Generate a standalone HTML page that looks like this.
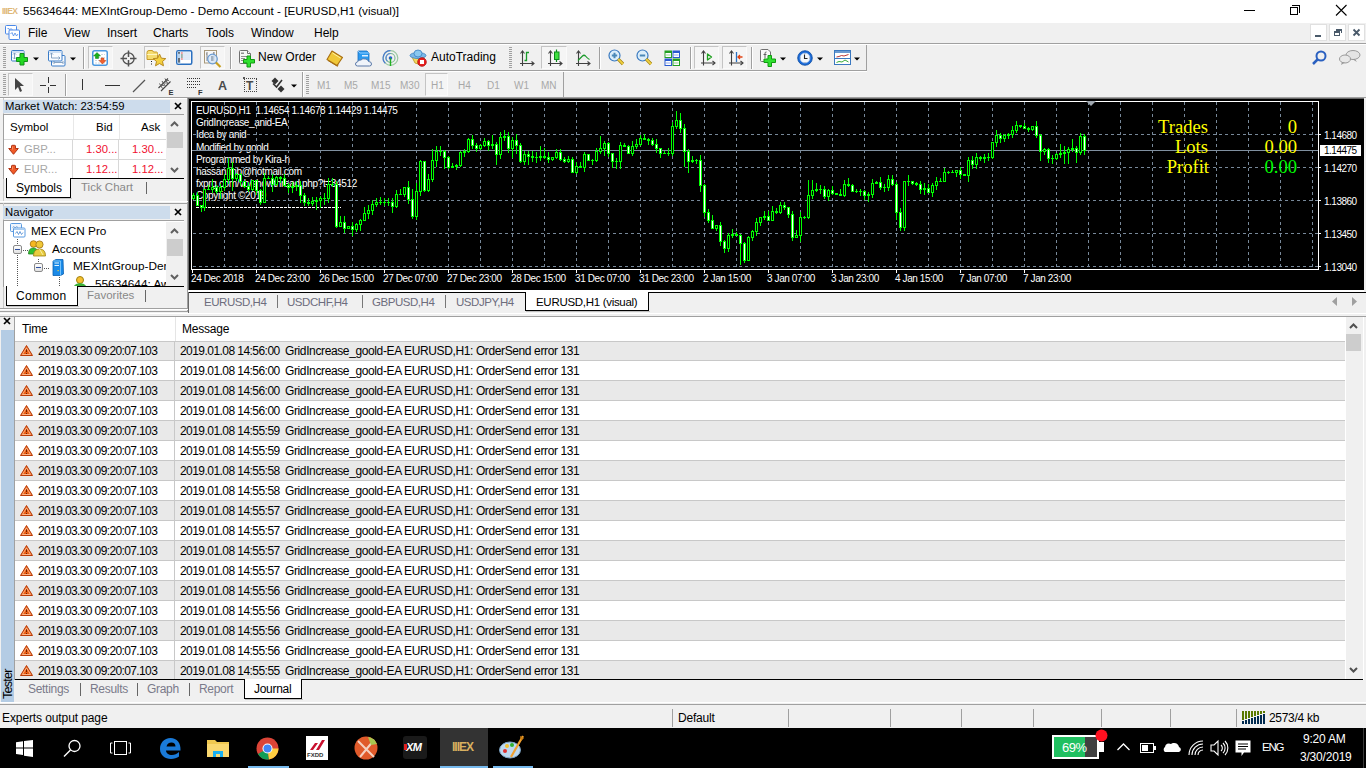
<!DOCTYPE html><html><head><meta charset="utf-8"><style>
*{margin:0;padding:0;box-sizing:border-box}
html,body{width:1366px;height:768px;overflow:hidden;background:#f0f0f0;font-family:"Liberation Sans",sans-serif;font-size:11px;color:#000;position:relative}
.abs{position:absolute}
.t{position:absolute;white-space:nowrap;line-height:1}
svg{position:absolute;overflow:visible}
</style></head><body>

<div class="abs" style="left:0px;top:0px;width:1366px;height:23px;background:#fff"></div>
<div class="t" style="left:2px;top:7px;font-size:8.5px;font-weight:bold;color:#e0b878;letter-spacing:-0.6px">IIIEX</div>
<div class="t" style="left:23px;top:5px;font-size:11.7px">55634644: MEXIntGroup-Demo - Demo Account - [EURUSD,H1 (visual)]</div>
<div class="abs" style="left:1244px;top:10px;width:11px;height:1px;background:#000"></div>
<div class="abs" style="left:1290px;top:7px;width:8px;height:8px;border:1px solid #000;background:#fff"></div>
<div class="abs" style="left:1292px;top:5px;width:8px;height:8px;border-top:1px solid #000;border-right:1px solid #000"></div>
<svg style="left:1336px;top:5px" width="11" height="11"><path d="M0 0L10.5 10.5M10.5 0L0 10.5" stroke="#000" stroke-width="1.1"/></svg>
<div class="abs" style="left:0px;top:23px;width:1366px;height:20px;background:#f0f0f0"></div>
<svg style="left:5px;top:25px" width="15" height="15"><rect x="0.5" y="0.5" width="11" height="8.5" rx="1" fill="#fff" stroke="#4a88e8"/><path d="M2.5 4L3.5 3L4.5 5L6 3.5L7.5 5" fill="none" stroke="#4a88e8" stroke-width="0.8"/><rect x="4" y="5" width="10.5" height="9.5" rx="1" fill="#fff" stroke="#4a88e8"/><path d="M5.5 9L7 7.5L8.5 11L10 8L11.5 11L13 9" fill="none" stroke="#4a88e8" stroke-width="0.8"/></svg>
<div class="t" style="left:28px;top:27px;font-size:12px">File</div>
<div class="t" style="left:64px;top:27px;font-size:12px">View</div>
<div class="t" style="left:107px;top:27px;font-size:12px">Insert</div>
<div class="t" style="left:153px;top:27px;font-size:12px">Charts</div>
<div class="t" style="left:206px;top:27px;font-size:12px">Tools</div>
<div class="t" style="left:251px;top:27px;font-size:12px">Window</div>
<div class="t" style="left:314px;top:27px;font-size:12px">Help</div>
<div class="abs" style="left:1310px;top:24px;width:17px;height:17px;background:#fff;border:1px solid #e0e0e0"></div>
<div class="abs" style="left:1329px;top:24px;width:17px;height:17px;background:#fff;border:1px solid #e0e0e0"></div>
<div class="abs" style="left:1348px;top:24px;width:17px;height:17px;background:#fff;border:1px solid #e0e0e0"></div>
<div class="abs" style="left:1315px;top:35px;width:6px;height:2px;background:#4a5a6a"></div>
<div class="abs" style="left:1334px;top:31px;width:6px;height:5px;border:1px solid #4a5a6a;border-top-width:2px"></div>
<div class="abs" style="left:1336px;top:29px;width:6px;height:4px;border-top:2px solid #4a5a6a;border-right:1px solid #4a5a6a"></div>
<svg style="left:1353px;top:29px" width="7" height="7"><path d="M0.5 0.5L6.5 6.5M6.5 0.5L0.5 6.5" stroke="#4a5a6a" stroke-width="1.8"/></svg>
<div class="abs" style="left:0px;top:43px;width:1366px;height:1px;background:#a0a0a0"></div>
<div class="abs" style="left:0px;top:44px;width:1366px;height:1px;background:#fff"></div>
<div class="abs" style="left:866px;top:45px;width:1px;height:26px;background:#a0a0a0"></div>
<div class="abs" style="left:0px;top:70px;width:866px;height:1px;background:#a0a0a0"></div>
<div class="abs" style="left:0px;top:71px;width:867px;height:1px;background:#fff"></div>
<div class="abs" style="left:3px;top:47px;width:3px;height:1px;background:#a0a0a0"></div>
<div class="abs" style="left:3px;top:49px;width:3px;height:1px;background:#a0a0a0"></div>
<div class="abs" style="left:3px;top:51px;width:3px;height:1px;background:#a0a0a0"></div>
<div class="abs" style="left:3px;top:53px;width:3px;height:1px;background:#a0a0a0"></div>
<div class="abs" style="left:3px;top:55px;width:3px;height:1px;background:#a0a0a0"></div>
<div class="abs" style="left:3px;top:57px;width:3px;height:1px;background:#a0a0a0"></div>
<div class="abs" style="left:3px;top:59px;width:3px;height:1px;background:#a0a0a0"></div>
<div class="abs" style="left:3px;top:61px;width:3px;height:1px;background:#a0a0a0"></div>
<div class="abs" style="left:3px;top:63px;width:3px;height:1px;background:#a0a0a0"></div>
<div class="abs" style="left:3px;top:65px;width:3px;height:1px;background:#a0a0a0"></div>
<div class="abs" style="left:3px;top:67px;width:3px;height:1px;background:#a0a0a0"></div>
<svg style="left:11px;top:50px" width="18" height="16"><rect x="0.5" y="0.5" width="12.5" height="10.5" rx="1" fill="#fafcff" stroke="#3a7cc8"/><rect x="1" y="1" width="11.5" height="2" fill="#cfe0f4"/><path d="M3.5 3V9M2 4.5L3.5 3L5 4.5M2 7.5L3.5 9L5 7.5" fill="none" stroke="#7a9abc" stroke-width="0.9"/><path d="M9 3.5H13V7.5H16.5V11.5H13V15H9V11.5H5.5V7.5H9Z" fill="#22d822" stroke="#10901a" stroke-width="1"/></svg>
<svg style="left:33px;top:57px" width="6" height="4"><path d="M0 0.5H6L3 3.5Z" fill="#000"/></svg>
<svg style="left:48px;top:50px" width="18" height="17"><rect x="3.5" y="5.5" width="13.5" height="10.5" rx="1" fill="#fafcff" stroke="#3a7cc8"/><path d="M6 12.5H15M6.5 11L5 12.5L6.5 14M14.5 11L16 12.5L14.5 14" fill="none" stroke="#7a9abc" stroke-width="0.9"/><rect x="0.5" y="0.5" width="13.5" height="10.5" rx="1" fill="#fafcff" stroke="#3a7cc8"/><rect x="1" y="1" width="12.5" height="2" fill="#cfe0f4"/><path d="M3.5 3V8M2 4.5L3.5 3L5 4.5M3.5 8H12M10.5 6.5L12 8L10.5 9.5" fill="none" stroke="#7a9abc" stroke-width="0.9"/></svg>
<svg style="left:70px;top:57px" width="6" height="4"><path d="M0 0.5H6L3 3.5Z" fill="#000"/></svg>
<div class="abs" style="left:83px;top:47px;width:1px;height:22px;background:#a0a0a0"></div>
<div class="abs" style="left:84px;top:47px;width:1px;height:22px;background:#fff"></div>
<div class="abs" style="left:88px;top:46px;width:25px;height:23px;background:#f5f5f5;border:1px solid #c4c4c4;border-right-color:#fafafa;border-bottom-color:#fafafa"></div>
<svg style="left:92px;top:50px" width="17" height="16"><rect x="0.75" y="0.75" width="14.5" height="14.5" rx="2" fill="#fff" stroke="#4a98e0" stroke-width="1.5"/><path d="M3 4.5H13M3 7.5H13M3 10.5H13M3 13H13" stroke="#d0d8e0" stroke-dasharray="2 1"/><path d="M5 2.5L8.5 6H6.5V8.5H3.5V6H1.5Z" fill="#18b018" stroke="#0a8010" stroke-width="0.5"/><path d="M10.5 14L14 10.5H12V8H9V10.5H7Z" fill="#f06030" stroke="#c04010" stroke-width="0.5"/></svg>
<svg style="left:120px;top:50px" width="17" height="17"><circle cx="8.5" cy="8.5" r="5.6" fill="none" stroke="#505050" stroke-width="1.3"/><path d="M8.5 0.5V7M8.5 10V16.5M0.5 8.5H7M10 8.5H16.5" stroke="#505050" stroke-width="1.5"/></svg>
<div class="abs" style="left:144px;top:46px;width:26px;height:23px;background:#f5f5f5;border:1px solid #c4c4c4;border-right-color:#fafafa;border-bottom-color:#fafafa"></div>
<svg style="left:146px;top:49px" width="21" height="18"><path d="M1 3.5Q1 1.5 3 1.5H6Q7 1.5 7.5 3H10.5Q11.5 3 11.5 4.5V10.5H1Z" fill="#f5dc70" stroke="#c89a28" stroke-width="1"/><path d="M1.2 5.5H11.3" stroke="#fff6c0"/><path d="M5.5 12V17" stroke="#222" stroke-dasharray="1 1.5"/><path d="M13.5 5L15.4 9.2L19.8 9.6L16.5 12.5L17.5 16.8L13.5 14.5L9.5 16.8L10.5 12.5L7.2 9.6L11.6 9.2Z" fill="#f4d040" stroke="#b88a20" stroke-width="1" stroke-linejoin="round"/></svg>
<svg style="left:176px;top:50px" width="17" height="16"><rect x="0.75" y="0.75" width="15" height="13.5" rx="1.5" fill="#fff" stroke="#2a70c0" stroke-width="1.5"/><rect x="1.5" y="1.5" width="3" height="12" fill="#b8d4f0"/><rect x="2.3" y="8" width="1.4" height="4.5" fill="#444"/><rect x="2.3" y="2.2" width="1.4" height="1.4" fill="#222"/><path d="M6.5 3H14.5M6.5 5H14.5M6.5 7H14.5M6.5 9H14.5" stroke="#c0d4f0"/><rect x="5.3" y="2.4" width="1.2" height="1.2" fill="#e02020"/><rect x="5.3" y="4.4" width="1.2" height="1.2" fill="#204020"/><rect x="5.3" y="6.4" width="1.2" height="1.2" fill="#204020"/><rect x="5.3" y="8.4" width="1.2" height="1.2" fill="#e02020"/></svg>
<div class="abs" style="left:200px;top:46px;width:25px;height:23px;background:#f5f5f5;border:1px solid #c4c4c4;border-right-color:#fafafa;border-bottom-color:#fafafa"></div>
<svg style="left:203px;top:49px" width="20" height="20"><rect x="1.5" y="1.5" width="12" height="12.5" fill="#f8f8f8" stroke="#a89878"/><path d="M4 3V12M3 5H4M4 9H5M11 3V12M10 4H11M11 8H12" stroke="#777" stroke-width="0.9"/><circle cx="9.5" cy="10" r="4.8" fill="#d8e8f8" fill-opacity="0.85" stroke="#6a9ad0" stroke-width="1.2"/><rect x="8" y="7" width="2.5" height="5" fill="#a0b0c0"/><path d="M13 13.5L17.5 18" stroke="#c8a020" stroke-width="2.2"/></svg>
<div class="abs" style="left:230px;top:47px;width:1px;height:22px;background:#a0a0a0"></div>
<div class="abs" style="left:231px;top:47px;width:1px;height:22px;background:#fff"></div>
<svg style="left:239px;top:50px" width="17" height="18"><path d="M0.5 1.5Q0.5 0.5 1.5 0.5H8.5L11.5 3.5V12.5Q11.5 13.5 10.5 13.5H1.5Q0.5 13.5 0.5 12.5Z" fill="#f8f8f8" stroke="#707070"/><path d="M8.5 0.5V3.5H11.5" fill="#fff" stroke="#707070"/><rect x="2" y="2.5" width="3" height="1.5" fill="#909090"/><path d="M2 6.5H8M2 8.5H6M2 10.5H5" stroke="#909090"/><path d="M8 6H11.5V9.5H15.5V13H11.5V17H8V13H4.5V9.5H8Z" fill="#30e030" stroke="#109a10" stroke-width="1"/></svg>
<div class="t" style="left:258px;top:51px;font-size:12px">New Order</div>
<svg style="left:326px;top:50px" width="18" height="17"><path d="M6 1L16.5 7.5L11 15.5L1 9.5Z" fill="#f0c838" stroke="#a86e10" stroke-width="1.1" stroke-linejoin="round"/><path d="M2 10.5L11.5 16.3L12 14.5" fill="none" stroke="#a86e10" stroke-width="1"/><path d="M6.5 3L14.5 8" stroke="#fff0a0" stroke-width="1"/></svg>
<svg style="left:355px;top:50px" width="17" height="17"><path d="M3 1H12L14 3V11H3Z" fill="#2a9af0" stroke="#1a70c0" stroke-width="0.8"/><rect x="7" y="5" width="6" height="1.5" fill="#e0f0ff"/><path d="M3 1L5 3H14" fill="none" stroke="#a8d8ff" stroke-width="0.8"/><path d="M2.5 16Q0.5 16 0.5 14Q0.5 12 2.5 12Q3 9.5 6 10Q7.5 8 10.5 9Q13 9 13.5 11.5Q16.5 11.5 16.5 14Q16.5 16 14.5 16Z" fill="#f0f4fa" stroke="#5a78a8" stroke-width="1"/></svg>
<svg style="left:382px;top:50px" width="18" height="17"><circle cx="8.5" cy="8" r="7.3" fill="none" stroke="#9ac8a0" stroke-width="1.2"/><path d="M8.5 0.7A7.3 7.3 0 0 0 3.3 13.2" fill="none" stroke="#4a7ad0" stroke-width="1.2"/><circle cx="8.5" cy="8" r="4.5" fill="none" stroke="#7ab890" stroke-width="1.1"/><path d="M8.5 3.5A4.5 4.5 0 0 0 5.3 11.2" fill="none" stroke="#5a8ad8" stroke-width="1.1"/><circle cx="8.5" cy="8" r="1.8" fill="#2a60d0"/><path d="M8.5 8V16" stroke="#22b022" stroke-width="1.4"/></svg>
<svg style="left:409px;top:49px" width="18" height="18"><path d="M3 8L15 8L12 16L6 14Z" fill="#f2d860" stroke="#b89820" stroke-width="0.8"/><ellipse cx="9" cy="6.5" rx="8" ry="3" fill="#7ab8e8" stroke="#3a80c0" stroke-width="0.8"/><ellipse cx="9" cy="4.5" rx="4" ry="3.5" fill="#8ac8f0" stroke="#3a80c0" stroke-width="0.8"/><circle cx="13" cy="13" r="4.3" fill="#e82020" stroke="#b01010" stroke-width="0.8"/><rect x="11" y="11" width="4" height="4" fill="#fff"/></svg>
<div class="t" style="left:431px;top:51px;font-size:12px">AutoTrading</div>
<div class="abs" style="left:509px;top:47px;width:3px;height:1px;background:#a0a0a0"></div>
<div class="abs" style="left:509px;top:49px;width:3px;height:1px;background:#a0a0a0"></div>
<div class="abs" style="left:509px;top:51px;width:3px;height:1px;background:#a0a0a0"></div>
<div class="abs" style="left:509px;top:53px;width:3px;height:1px;background:#a0a0a0"></div>
<div class="abs" style="left:509px;top:55px;width:3px;height:1px;background:#a0a0a0"></div>
<div class="abs" style="left:509px;top:57px;width:3px;height:1px;background:#a0a0a0"></div>
<div class="abs" style="left:509px;top:59px;width:3px;height:1px;background:#a0a0a0"></div>
<div class="abs" style="left:509px;top:61px;width:3px;height:1px;background:#a0a0a0"></div>
<div class="abs" style="left:509px;top:63px;width:3px;height:1px;background:#a0a0a0"></div>
<div class="abs" style="left:509px;top:65px;width:3px;height:1px;background:#a0a0a0"></div>
<div class="abs" style="left:509px;top:67px;width:3px;height:1px;background:#a0a0a0"></div>
<svg style="left:518px;top:49px" width="18" height="18"><path d="M4.5 2V17M2 14.5H16" stroke="#404040" stroke-width="1.1"/><path d="M2.5 4.5L4.5 2L6.5 4.5M13.5 12.5L16 14.5L13.5 16.5" fill="none" stroke="#404040" stroke-width="1.1"/><path d="M6.5 11.5H8.5V3.5H11" fill="none" stroke="#1a9a2a" stroke-width="1.3"/></svg>
<div class="abs" style="left:541px;top:46px;width:26px;height:23px;background:#f5f5f5;border:1px solid #c4c4c4;border-right-color:#fafafa;border-bottom-color:#fafafa"></div>
<svg style="left:546px;top:49px" width="18" height="18"><path d="M4.5 2V17M2 14.5H16" stroke="#404040" stroke-width="1.1"/><path d="M2.5 4.5L4.5 2L6.5 4.5M13.5 12.5L16 14.5L13.5 16.5" fill="none" stroke="#404040" stroke-width="1.1"/><path d="M10.5 0.5V13" stroke="#0a8a1a" stroke-width="1.2"/><rect x="8.5" y="3" width="4.5" height="7.5" fill="#40e040" stroke="#0a8a1a" stroke-width="1"/></svg>
<svg style="left:574px;top:49px" width="18" height="18"><path d="M4.5 2V17M2 14.5H16" stroke="#404040" stroke-width="1.1"/><path d="M2.5 4.5L4.5 2L6.5 4.5M13.5 12.5L16 14.5L13.5 16.5" fill="none" stroke="#404040" stroke-width="1.1"/><path d="M4 11.5Q6.5 9 8.5 7Q10 5.5 11.5 7Q13.5 9.5 15.5 10.5" fill="none" stroke="#1a9a2a" stroke-width="1.2"/></svg>
<div class="abs" style="left:599px;top:47px;width:1px;height:22px;background:#a0a0a0"></div>
<div class="abs" style="left:600px;top:47px;width:1px;height:22px;background:#fff"></div>
<svg style="left:608px;top:49px" width="17" height="17"><circle cx="6.5" cy="6.5" r="5.5" fill="#dceefa" stroke="#3a7ac0" stroke-width="1.2"/><path d="M10.2 10.2L15 15" stroke="#a08010" stroke-width="3.2"/><path d="M10.2 10.2L15 15" stroke="#f0d040" stroke-width="1.8"/><path d="M3.8 6.5H9.2M6.5 3.8V9.2" stroke="#4a88b8" stroke-width="2"/></svg>
<svg style="left:636px;top:49px" width="17" height="17"><circle cx="6.5" cy="6.5" r="5.5" fill="#dceefa" stroke="#3a7ac0" stroke-width="1.2"/><path d="M10.2 10.2L15 15" stroke="#a08010" stroke-width="3.2"/><path d="M10.2 10.2L15 15" stroke="#f0d040" stroke-width="1.8"/><path d="M3.8 6.5H9.2" stroke="#4a88b8" stroke-width="2"/></svg>
<svg style="left:664px;top:50px" width="17" height="17"><rect x="0.5" y="0.5" width="7.5" height="7.5" fill="#22a022"/><rect x="1.5" y="3.0" width="5.5" height="4" fill="#fff"/><path d="M2.0 5.0H6.5" stroke="#22a022" stroke-width="0.8" opacity="0.6"/><rect x="8.5" y="0.5" width="7.5" height="7.5" fill="#2a5ad0"/><rect x="9.5" y="3.0" width="5.5" height="4" fill="#fff"/><path d="M10.0 5.0H14.5" stroke="#2a5ad0" stroke-width="0.8" opacity="0.6"/><rect x="0.5" y="8.5" width="7.5" height="7.5" fill="#2a5ad0"/><rect x="1.5" y="11.0" width="5.5" height="4" fill="#fff"/><path d="M2.0 13.0H6.5" stroke="#2a5ad0" stroke-width="0.8" opacity="0.6"/><rect x="8.5" y="8.5" width="7.5" height="7.5" fill="#22a022"/><rect x="9.5" y="11.0" width="5.5" height="4" fill="#fff"/><path d="M10.0 13.0H14.5" stroke="#22a022" stroke-width="0.8" opacity="0.6"/></svg>
<div class="abs" style="left:690px;top:47px;width:1px;height:22px;background:#a0a0a0"></div>
<div class="abs" style="left:691px;top:47px;width:1px;height:22px;background:#fff"></div>
<div class="abs" style="left:694px;top:46px;width:25px;height:23px;background:#f5f5f5;border:1px solid #c4c4c4;border-right-color:#fafafa;border-bottom-color:#fafafa"></div>
<svg style="left:699px;top:49px" width="18" height="18"><path d="M4.5 2V16.5M2 14H16" stroke="#404040" stroke-width="1.1"/><path d="M2.5 4.5L4.5 2L6.5 4.5M13.5 12L16 14L13.5 16" fill="none" stroke="#404040" stroke-width="1.1"/><path d="M8.5 5V11L12.5 8Z" fill="none" stroke="#20a020" stroke-width="1.3" stroke-linejoin="round"/></svg>
<div class="abs" style="left:722px;top:46px;width:25px;height:23px;background:#f5f5f5;border:1px solid #c4c4c4;border-right-color:#fafafa;border-bottom-color:#fafafa"></div>
<svg style="left:727px;top:49px" width="18" height="18"><path d="M4.5 2V16.5M2 14H16" stroke="#404040" stroke-width="1.1"/><path d="M2.5 4.5L4.5 2L6.5 4.5M13.5 12L16 14L13.5 16" fill="none" stroke="#404040" stroke-width="1.1"/><path d="M9.5 3V13" stroke="#2a70c0" stroke-width="1.3"/><path d="M15.5 8H11M13 6L11 8L13 10" fill="none" stroke="#e04010" stroke-width="1.3"/></svg>
<div class="abs" style="left:751px;top:47px;width:1px;height:22px;background:#a0a0a0"></div>
<div class="abs" style="left:752px;top:47px;width:1px;height:22px;background:#fff"></div>
<svg style="left:760px;top:49px" width="19" height="19"><path d="M0.5 1.5Q0.5 0.5 1.5 0.5H8L10.5 3V12.5H1.5Q0.5 12.5 0.5 11.5Z" fill="#f8f8f8" stroke="#707070"/><path d="M5 9V4Q5 3 6.5 3M3.5 5.5H6.5" fill="none" stroke="#555" stroke-width="0.9"/><path d="M8 6.5H11.5V10H15.5V13.5H11.5V17.5H8V13.5H4V10H8Z" fill="#30e030" stroke="#109a10" stroke-width="1"/></svg>
<svg style="left:780px;top:57px" width="6" height="4"><path d="M0 0.5H6L3 3.5Z" fill="#000"/></svg>
<svg style="left:797px;top:50px" width="17" height="17"><circle cx="8" cy="8" r="7.3" fill="#1a6ad8" stroke="#0a4aa0" stroke-width="0.8"/><circle cx="8" cy="8" r="5" fill="#f4f8fc" stroke="#a0c0e8" stroke-width="0.6"/><path d="M7.5 4.5V8.5H10.5" fill="none" stroke="#222" stroke-width="1.1"/><path d="M8 3.3V3.9M8 12.1V12.7M3.3 8H3.9M12.1 8H12.7" stroke="#666" stroke-width="0.8"/></svg>
<svg style="left:817px;top:57px" width="6" height="4"><path d="M0 0.5H6L3 3.5Z" fill="#000"/></svg>
<svg style="left:834px;top:50px" width="17" height="15"><rect x="0.5" y="0.5" width="16" height="14" fill="#fff" stroke="#3a78c0"/><rect x="1" y="1" width="15" height="2" fill="#6a9ad0"/><path d="M2.5 7L5 6.5L7.5 5.5L10 6L14.5 4.5" fill="none" stroke="#b02020" stroke-width="0.9"/><path d="M2.5 12.5L5 11.5L8 12L11 10L14.5 12" fill="none" stroke="#20a020" stroke-width="0.9"/><path d="M1 8.5H16" stroke="#3a78c0"/></svg>
<svg style="left:854px;top:57px" width="6" height="4"><path d="M0 0.5H6L3 3.5Z" fill="#000"/></svg>
<svg style="left:1311px;top:50px" width="16" height="16"><circle cx="10" cy="6" r="4.5" fill="none" stroke="#2a60c0" stroke-width="2"/><path d="M7 9L2 14" stroke="#2a60c0" stroke-width="2.5"/></svg>
<svg style="left:1339px;top:50px" width="22" height="15"><ellipse cx="14" cy="5" rx="7" ry="4.5" fill="#e4e4e4" stroke="#9a9a9a"/><path d="M16 9L18 12L13 9Z" fill="#9a9a9a"/><ellipse cx="6" cy="9" rx="5.5" ry="4" fill="#e8e8e8" stroke="#9a9a9a"/><path d="M3 12L2 15L6 12.5Z" fill="#9a9a9a"/></svg>
<div class="abs" style="left:563px;top:72px;width:1px;height:26px;background:#a0a0a0"></div>
<div class="abs" style="left:3px;top:74px;width:3px;height:1px;background:#a0a0a0"></div>
<div class="abs" style="left:3px;top:76px;width:3px;height:1px;background:#a0a0a0"></div>
<div class="abs" style="left:3px;top:78px;width:3px;height:1px;background:#a0a0a0"></div>
<div class="abs" style="left:3px;top:80px;width:3px;height:1px;background:#a0a0a0"></div>
<div class="abs" style="left:3px;top:82px;width:3px;height:1px;background:#a0a0a0"></div>
<div class="abs" style="left:3px;top:84px;width:3px;height:1px;background:#a0a0a0"></div>
<div class="abs" style="left:3px;top:86px;width:3px;height:1px;background:#a0a0a0"></div>
<div class="abs" style="left:3px;top:88px;width:3px;height:1px;background:#a0a0a0"></div>
<div class="abs" style="left:3px;top:90px;width:3px;height:1px;background:#a0a0a0"></div>
<div class="abs" style="left:3px;top:92px;width:3px;height:1px;background:#a0a0a0"></div>
<div class="abs" style="left:3px;top:94px;width:3px;height:1px;background:#a0a0a0"></div>
<div class="abs" style="left:8px;top:73px;width:25px;height:23px;background:#f5f5f5;border:1px solid #c4c4c4;border-right-color:#fafafa;border-bottom-color:#fafafa"></div>
<svg style="left:15px;top:78px" width="10" height="14"><path d="M0 0L9 8H5L7 13L5 14L3 9L0 12Z" fill="#444"/></svg>
<svg style="left:40px;top:77px" width="16" height="16" shape-rendering="crispEdges"><path d="M8 0V6M8 10V16M0 8H6M10 8H16" stroke="#333" stroke-width="1"/></svg>
<div class="abs" style="left:65px;top:74px;width:1px;height:22px;background:#a0a0a0"></div>
<div class="abs" style="left:66px;top:74px;width:1px;height:22px;background:#fff"></div>
<div class="abs" style="left:82px;top:79px;width:1px;height:11px;background:#333"></div>
<div class="abs" style="left:105px;top:85px;width:15px;height:1px;background:#333"></div>
<svg style="left:132px;top:79px" width="14" height="14"><path d="M1 13L13 1" stroke="#555" stroke-width="1.3"/></svg>
<svg style="left:157px;top:76px" width="20" height="20"><path d="M1.5 12L11 2.5M4 15L13.5 5.5" stroke="#444" stroke-width="1.1"/><path d="M2.5 7.5L5.5 12.5M5 5L8.5 10.5M8 2.5L11 8" stroke="#555" stroke-width="1"/><path d="M3 9.5H7M5.5 7H10M8.5 4.5H12" stroke="#666" stroke-width="0.9"/><text x="11.5" y="18.5" font-size="7.5" font-weight="bold" fill="#333" font-family="Liberation Sans">E</text></svg>
<svg style="left:187px;top:77px" width="18" height="19" shape-rendering="crispEdges"><path d="M0 1.5H14M0 4.5H14M0 7.5H14M0 10.5H9" stroke="#333" stroke-width="1" stroke-dasharray="1 1"/><text x="11" y="17.5" font-size="7.5" font-weight="bold" fill="#333" font-family="Liberation Sans">F</text></svg>
<div class="t" style="left:218px;top:80px;font-size:12.5px;font-weight:bold;color:#4a4a4a">A</div>
<div class="abs" style="left:244px;top:78px;width:13px;height:14px;border:1px dotted #444"></div>
<div class="abs" style="left:243px;top:77px;width:2px;height:2px;background:#555"></div>
<div class="t" style="left:246px;top:80px;font-size:12px;font-weight:bold;color:#4a4a4a">T</div>
<svg style="left:271px;top:77px" width="14" height="16"><path d="M4 0.5L7.5 4L4 7.5L0.5 4Z" fill="#333"/><path d="M10 8.5L13.5 12L10 15.5L6.5 12Z" fill="#333"/><path d="M2 6.5L5.5 10L11 3" fill="none" stroke="#333" stroke-width="1.6"/></svg>
<svg style="left:291px;top:84px" width="6" height="4"><path d="M0 0.5H6L3 3.5Z" fill="#000"/></svg>
<div class="abs" style="left:302px;top:72px;width:1px;height:25px;background:#a0a0a0"></div>
<div class="abs" style="left:303px;top:72px;width:1px;height:25px;background:#fff"></div>
<div class="abs" style="left:306px;top:75px;width:3px;height:1px;background:#a0a0a0"></div>
<div class="abs" style="left:306px;top:77px;width:3px;height:1px;background:#a0a0a0"></div>
<div class="abs" style="left:306px;top:79px;width:3px;height:1px;background:#a0a0a0"></div>
<div class="abs" style="left:306px;top:81px;width:3px;height:1px;background:#a0a0a0"></div>
<div class="abs" style="left:306px;top:83px;width:3px;height:1px;background:#a0a0a0"></div>
<div class="abs" style="left:306px;top:85px;width:3px;height:1px;background:#a0a0a0"></div>
<div class="abs" style="left:306px;top:87px;width:3px;height:1px;background:#a0a0a0"></div>
<div class="abs" style="left:306px;top:89px;width:3px;height:1px;background:#a0a0a0"></div>
<div class="abs" style="left:306px;top:91px;width:3px;height:1px;background:#a0a0a0"></div>
<div class="abs" style="left:306px;top:93px;width:3px;height:1px;background:#a0a0a0"></div>
<div class="abs" style="left:425px;top:73px;width:23px;height:23px;background:#f5f5f5;border:1px solid #c4c4c4;border-right-color:#fafafa;border-bottom-color:#fafafa"></div>
<div class="t" style="left:317px;top:81px;font-size:10px;color:#a8a8a8">M1</div>
<div class="t" style="left:344px;top:81px;font-size:10px;color:#a8a8a8">M5</div>
<div class="t" style="left:371px;top:81px;font-size:10px;color:#a8a8a8">M15</div>
<div class="t" style="left:400px;top:81px;font-size:10px;color:#a8a8a8">M30</div>
<div class="t" style="left:431px;top:81px;font-size:10px;color:#a8a8a8">H1</div>
<div class="t" style="left:458px;top:81px;font-size:10px;color:#a8a8a8">H4</div>
<div class="t" style="left:487px;top:81px;font-size:10px;color:#a8a8a8">D1</div>
<div class="t" style="left:514px;top:81px;font-size:10px;color:#a8a8a8">W1</div>
<div class="t" style="left:541px;top:81px;font-size:10px;color:#a8a8a8">MN</div>
<div class="abs" style="left:0px;top:97px;width:188px;height:1px;background:#a0a0a0"></div>
<div class="abs" style="left:0px;top:98px;width:187px;height:1px;background:#fff"></div>
<div class="abs" style="left:187px;top:97px;width:1px;height:215px;background:#a0a0a0"></div>
<div class="abs" style="left:3px;top:98px;width:1px;height:103px;background:#c8c8c8"></div>
<div class="abs" style="left:3px;top:100px;width:167px;height:13px;background:#cddcec"></div>
<div class="t" style="left:5px;top:101px;font-size:11.3px">Market Watch: 23:54:59</div>
<svg style="left:175px;top:103px" width="6" height="6"><path d="M0 0L6 6M6 0L0 6" stroke="#000" stroke-width="1.7"/></svg>
<div class="abs" style="left:3px;top:114px;width:181px;height:65px;background:#fff;border:1px solid #a0a0a0;border-right:none;border-bottom:none"></div>
<div class="abs" style="left:73px;top:115px;width:1px;height:24px;background:#e8e8e8"></div>
<div class="abs" style="left:119px;top:115px;width:1px;height:24px;background:#e8e8e8"></div>
<div class="abs" style="left:4px;top:139px;width:162px;height:1px;background:#d8d8d8"></div>
<div class="abs" style="left:4px;top:159px;width:162px;height:1px;background:#d8d8d8"></div>
<div class="abs" style="left:72px;top:139px;width:1px;height:40px;background:#d8d8d8"></div>
<div class="abs" style="left:118px;top:139px;width:1px;height:40px;background:#d8d8d8"></div>
<div class="t" style="left:10px;top:122px;font-size:11.5px">Symbol</div>
<div class="t" style="left:96px;top:122px;font-size:11.5px">Bid</div>
<div class="t" style="left:141px;top:122px;font-size:11.5px">Ask</div>
<svg style="left:8px;top:145px" width="11" height="10"><path d="M3.5 1Q3.5 0.3 4.5 0.3H6.5Q7.5 0.3 7.5 1V3.5H10.3L5.5 9.3L0.7 3.5H3.5Z" fill="#f05a28" stroke="#a82808" stroke-width="0.9" stroke-linejoin="round"/><path d="M4.5 1.5V4.5" stroke="#ffa070" stroke-width="0.8"/></svg>
<div class="t" style="left:24px;top:144px;font-size:11.3px;color:#a8a8a8">GBP...</div>
<div class="t" style="left:86px;top:144px;font-size:11.3px;color:#f01030">1.30...</div>
<div class="t" style="left:132px;top:144px;font-size:11.3px;color:#f01030">1.30...</div>
<svg style="left:8px;top:165px" width="11" height="10"><path d="M3.5 1Q3.5 0.3 4.5 0.3H6.5Q7.5 0.3 7.5 1V3.5H10.3L5.5 9.3L0.7 3.5H3.5Z" fill="#f05a28" stroke="#a82808" stroke-width="0.9" stroke-linejoin="round"/><path d="M4.5 1.5V4.5" stroke="#ffa070" stroke-width="0.8"/></svg>
<div class="t" style="left:24px;top:164px;font-size:11.3px;color:#a8a8a8">EUR...</div>
<div class="t" style="left:86px;top:164px;font-size:11.3px;color:#f01030">1.12...</div>
<div class="t" style="left:132px;top:164px;font-size:11.3px;color:#f01030">1.12...</div>
<div class="abs" style="left:166px;top:115px;width:18px;height:64px;background:#f0f0f0"></div>
<svg style="left:170px;top:121px" width="9" height="6"><path d="M1 5L4.5 1.5L8 5" fill="none" stroke="#606060" stroke-width="2"/></svg>
<div class="abs" style="left:167px;top:132px;width:16px;height:16px;background:#cdcdcd"></div>
<svg style="left:170px;top:167px" width="9" height="6"><path d="M1 1L4.5 4.5L8 1" fill="none" stroke="#606060" stroke-width="2"/></svg>
<div class="abs" style="left:70px;top:178px;width:114px;height:1px;background:#000"></div>
<div class="abs" style="left:6px;top:178px;width:65px;height:20px;background:#fff;border:1px solid #000;border-top:none"></div>
<div class="abs" style="left:7px;top:198px;width:65px;height:1px;background:#c8c8c8"></div>
<div class="t" style="left:16px;top:182px;font-size:12px;letter-spacing:0px">Symbols</div>
<div class="t" style="left:81px;top:182px;font-size:11.5px;color:#888">Tick Chart</div>
<div class="abs" style="left:146px;top:182px;width:1px;height:12px;background:#666"></div>
<div class="abs" style="left:0px;top:201px;width:188px;height:1px;background:#fff"></div>
<div class="abs" style="left:0px;top:203px;width:188px;height:1px;background:#a0a0a0"></div>
<div class="abs" style="left:3px;top:203px;width:1px;height:105px;background:#c8c8c8"></div>
<div class="abs" style="left:3px;top:206px;width:167px;height:13px;background:#cddcec"></div>
<div class="t" style="left:5px;top:207px;font-size:11.3px">Navigator</div>
<svg style="left:175px;top:209px" width="6" height="6"><path d="M0 0L6 6M6 0L0 6" stroke="#000" stroke-width="1.7"/></svg>
<div class="abs" style="left:3px;top:220px;width:181px;height:67px;background:#fff;border:1px solid #a0a0a0;border-right:none;border-bottom:none"></div>
<svg style="left:10px;top:223px" width="16" height="15"><rect x="0.5" y="0.5" width="11" height="8" rx="1" fill="#eef4fc" stroke="#5a9ae0"/><path d="M2.5 4.5L4 3.5L5 5L6.5 3.5L8 4.5" fill="none" stroke="#6a9ad0" stroke-width="0.8"/><rect x="3.5" y="5" width="11.5" height="9" rx="1" fill="#fff" stroke="#5a9ae0"/><rect x="4" y="5.5" width="10.5" height="1.5" fill="#a8ccf0"/><path d="M5.5 10.5L7 8.5L8.5 11.5L10 8.5L11.5 11.5L13 9.5" fill="none" stroke="#4a88d0" stroke-width="0.8"/></svg>
<div class="t" style="left:31px;top:226px;font-size:11.8px">MEX ECN Pro</div>
<svg style="left:4px;top:221px" width="162" height="66" shape-rendering="crispEdges"><path d="M13.5 18V24M13.5 34V66M34.5 38V42M55.5 56V66M19 29H24M40 47H45" stroke="#555" stroke-dasharray="1 1" fill="none"/></svg>
<div class="abs" style="left:13px;top:245px;width:9px;height:9px;background:linear-gradient(#fff,#e0e0e0);border:1px solid #8a8a8a;border-radius:2px"></div>
<div class="abs" style="left:15px;top:249px;width:5px;height:1px;background:#3050a0"></div>
<div class="abs" style="left:34px;top:263px;width:9px;height:9px;background:linear-gradient(#fff,#e0e0e0);border:1px solid #8a8a8a;border-radius:2px"></div>
<div class="abs" style="left:36px;top:267px;width:5px;height:1px;background:#3050a0"></div>
<svg style="left:28px;top:239px" width="20" height="18"><circle cx="5.5" cy="5" r="3.3" fill="#f5b820" stroke="#a07010" stroke-width="0.8"/><path d="M0.5 15Q0.5 9 5.5 9Q10 9 10 15Z" fill="#30c030" stroke="#208020" stroke-width="0.8"/><circle cx="11.5" cy="5.5" r="3.6" fill="#f0c838" stroke="#a07010" stroke-width="0.8"/><path d="M5.5 17Q5.5 10 11.5 10Q17.5 10 17.5 17Z" fill="#e8cc40" stroke="#a08010" stroke-width="0.8"/><path d="M11.5 10L15 16" stroke="#fff8c0" stroke-width="0.8"/></svg>
<div class="t" style="left:52px;top:244px;font-size:11.8px">Accounts</div>
<svg style="left:52px;top:259px" width="13" height="17"><path d="M1 2L4 0.5H11L11.5 15L8.5 16.5H1Z" fill="#1a8ae8" stroke="#0a60b0" stroke-width="0.8"/><path d="M1 2H8.5V16.5" fill="none" stroke="#8ad0ff" stroke-width="0.8"/><path d="M2.5 4H7M2.5 6.5H7" stroke="#e0f4ff" stroke-width="1"/><rect x="5.5" y="11" width="1.2" height="1.2" fill="#f0d040"/></svg>
<div class="t" style="left:73px;top:261px;font-size:11.8px">MEXIntGroup-Der</div>
<svg style="left:74px;top:276px" width="12" height="11"><circle cx="6" cy="4" r="3.5" fill="#f5c030" stroke="#a08010"/><path d="M0 11C0 6 12 6 12 11Z" fill="#3ab03a"/></svg>
<div class="abs" style="left:4px;top:222px;width:162px;height:64px;overflow:hidden"><div class="t" style="left:91px;top:57px;font-size:11.8px">55634644: Aw</div></div>
<div class="abs" style="left:166px;top:222px;width:18px;height:64px;background:#f0f0f0"></div>
<svg style="left:170px;top:228px" width="9" height="6"><path d="M1 5L4.5 1.5L8 5" fill="none" stroke="#606060" stroke-width="2"/></svg>
<div class="abs" style="left:167px;top:239px;width:16px;height:17px;background:#cdcdcd"></div>
<svg style="left:170px;top:274px" width="9" height="6"><path d="M1 1L4.5 4.5L8 1" fill="none" stroke="#606060" stroke-width="2"/></svg>
<div class="abs" style="left:76px;top:286px;width:108px;height:1px;background:#000"></div>
<div class="abs" style="left:6px;top:286px;width:72px;height:20px;background:#fff;border:1px solid #000;border-top:none"></div>
<div class="abs" style="left:7px;top:306px;width:72px;height:1px;background:#c8c8c8"></div>
<div class="t" style="left:16px;top:290px;font-size:12px;letter-spacing:0.3px">Common</div>
<div class="t" style="left:87px;top:290px;font-size:11.5px;color:#888">Favorites</div>
<div class="abs" style="left:145px;top:290px;width:1px;height:12px;background:#666"></div>
<div class="abs" style="left:0px;top:308px;width:188px;height:1px;background:#a0a0a0"></div>
<div class="abs" style="left:188px;top:97px;width:1178px;height:1px;background:#a0a0a0"></div>
<div class="abs" style="left:188px;top:98px;width:1178px;height:1px;background:#696969"></div>
<div class="abs" style="left:188px;top:99px;width:2px;height:191px;background:#696969"></div>
<div class="abs" style="left:189px;top:99px;width:1175px;height:191px;background:#000"></div>
<div class="abs" style="left:1364px;top:98px;width:2px;height:195px;background:#f0f0f0"></div>
<div class="t" style="left:196px;top:106px;font-size:10px;color:#fff;letter-spacing:-0.35px">EURUSD,H1&nbsp; 1.14654 1.14678 1.14429 1.14475</div>
<div class="t" style="left:196px;top:118px;font-size:10px;color:#fff;letter-spacing:-0.35px">GridIncrease_anid-EA</div>
<div class="t" style="left:196px;top:130px;font-size:10px;color:#fff;letter-spacing:-0.35px">Idea by anid</div>
<div class="t" style="left:196px;top:143px;font-size:10px;color:#fff;letter-spacing:-0.35px">Modified by goold</div>
<div class="t" style="left:196px;top:155px;font-size:10px;color:#fff;letter-spacing:-0.35px">Programmed by Kira-h</div>
<div class="t" style="left:196px;top:167px;font-size:10px;color:#fff;letter-spacing:-0.35px">hassan.mb@hotmail.com</div>
<div class="t" style="left:196px;top:179px;font-size:10px;color:#fff;letter-spacing:-0.35px">fxprg.com/vb/showthread.php?t=34512</div>
<div class="t" style="left:196px;top:191px;font-size:10px;color:#fff;letter-spacing:-0.35px">Copyright ©2019</div>
<svg style="left:189px;top:98px" width="1175" height="192" shape-rendering="crispEdges"><path d="M3 36.5H1129" stroke="#778899" stroke-dasharray="3 3" stroke-dashoffset="5"/><path d="M3 69.5H1129" stroke="#778899" stroke-dasharray="3 3" stroke-dashoffset="5"/><path d="M3 102.5H1129" stroke="#778899" stroke-dasharray="3 3" stroke-dashoffset="5"/><path d="M3 135.5H1129" stroke="#778899" stroke-dasharray="3 3" stroke-dashoffset="5"/><path d="M3 168.5H1129" stroke="#778899" stroke-dasharray="3 3" stroke-dashoffset="5"/><path d="M35.5 4V171" stroke="#778899" stroke-dasharray="3 3"/><path d="M67.5 4V171" stroke="#778899" stroke-dasharray="3 3"/><path d="M99.5 4V171" stroke="#778899" stroke-dasharray="3 3"/><path d="M131.5 4V171" stroke="#778899" stroke-dasharray="3 3"/><path d="M163.5 4V171" stroke="#778899" stroke-dasharray="3 3"/><path d="M195.5 4V171" stroke="#778899" stroke-dasharray="3 3"/><path d="M227.5 4V171" stroke="#778899" stroke-dasharray="3 3"/><path d="M259.5 4V171" stroke="#778899" stroke-dasharray="3 3"/><path d="M291.5 4V171" stroke="#778899" stroke-dasharray="3 3"/><path d="M323.5 4V171" stroke="#778899" stroke-dasharray="3 3"/><path d="M355.5 4V171" stroke="#778899" stroke-dasharray="3 3"/><path d="M387.5 4V171" stroke="#778899" stroke-dasharray="3 3"/><path d="M419.5 4V171" stroke="#778899" stroke-dasharray="3 3"/><path d="M451.5 4V171" stroke="#778899" stroke-dasharray="3 3"/><path d="M483.5 4V171" stroke="#778899" stroke-dasharray="3 3"/><path d="M515.5 4V171" stroke="#778899" stroke-dasharray="3 3"/><path d="M547.5 4V171" stroke="#778899" stroke-dasharray="3 3"/><path d="M579.5 4V171" stroke="#778899" stroke-dasharray="3 3"/><path d="M611.5 4V171" stroke="#778899" stroke-dasharray="3 3"/><path d="M643.5 4V171" stroke="#778899" stroke-dasharray="3 3"/><path d="M675.5 4V171" stroke="#778899" stroke-dasharray="3 3"/><path d="M707.5 4V171" stroke="#778899" stroke-dasharray="3 3"/><path d="M739.5 4V171" stroke="#778899" stroke-dasharray="3 3"/><path d="M771.5 4V171" stroke="#778899" stroke-dasharray="3 3"/><path d="M803.5 4V171" stroke="#778899" stroke-dasharray="3 3"/><path d="M835.5 4V171" stroke="#778899" stroke-dasharray="3 3"/><path d="M867.5 4V171" stroke="#778899" stroke-dasharray="3 3"/><path d="M899.5 4V171" stroke="#778899" stroke-dasharray="3 3"/><path d="M931.5 4V171" stroke="#778899" stroke-dasharray="3 3"/><path d="M963.5 4V171" stroke="#778899" stroke-dasharray="3 3"/><path d="M995.5 4V171" stroke="#778899" stroke-dasharray="3 3"/><path d="M1027.5 4V171" stroke="#778899" stroke-dasharray="3 3"/><path d="M1059.5 4V171" stroke="#778899" stroke-dasharray="3 3"/><path d="M1091.5 4V171" stroke="#778899" stroke-dasharray="3 3"/><path d="M1123.5 4V171" stroke="#778899" stroke-dasharray="3 3"/><path d="M3 52.5H1129" stroke="#8090a0"/><path d="M7 109.5H152" stroke="#fff" stroke-dasharray="3 1"/><path d="M4.5 95V102" stroke="#00ff00"/><rect x="3.5" y="97.5" width="2" height="3" fill="#000" stroke="#00ff00"/><path d="M8.5 94V108" stroke="#00ff00"/><rect x="7.5" y="97.5" width="2" height="10" fill="#fff" stroke="#00ff00"/><path d="M12.5 107V114" stroke="#00ff00"/><rect x="11.5" y="107.5" width="2" height="2" fill="#fff" stroke="#00ff00"/><path d="M15.5 91V113" stroke="#00ff00"/><rect x="14.5" y="91.5" width="2" height="18" fill="#000" stroke="#00ff00"/><path d="M19.5 87V92" stroke="#00ff00"/><rect x="18" y="91" width="3" height="1" fill="#00ff00"/><path d="M23.5 81V95" stroke="#00ff00"/><rect x="22.5" y="89.5" width="2" height="2" fill="#000" stroke="#00ff00"/><path d="M27.5 87V96" stroke="#00ff00"/><rect x="26.5" y="89.5" width="2" height="4" fill="#fff" stroke="#00ff00"/><path d="M31.5 86V101" stroke="#00ff00"/><rect x="30.5" y="89.5" width="2" height="4" fill="#000" stroke="#00ff00"/><path d="M35.5 76V93" stroke="#00ff00"/><rect x="34.5" y="81.5" width="2" height="8" fill="#000" stroke="#00ff00"/><path d="M39.5 60V86" stroke="#00ff00"/><rect x="38.5" y="70.5" width="2" height="11" fill="#000" stroke="#00ff00"/><path d="M43.5 64V93" stroke="#00ff00"/><rect x="42.5" y="70.5" width="2" height="10" fill="#fff" stroke="#00ff00"/><path d="M47.5 75V83" stroke="#00ff00"/><rect x="46.5" y="76.5" width="2" height="4" fill="#000" stroke="#00ff00"/><path d="M51.5 75V88" stroke="#00ff00"/><rect x="50.5" y="76.5" width="2" height="7" fill="#fff" stroke="#00ff00"/><path d="M55.5 83V90" stroke="#00ff00"/><rect x="54.5" y="83.5" width="2" height="5" fill="#fff" stroke="#00ff00"/><path d="M59.5 84V94" stroke="#00ff00"/><rect x="58.5" y="88.5" width="2" height="3" fill="#fff" stroke="#00ff00"/><path d="M63.5 82V93" stroke="#00ff00"/><rect x="62.5" y="82.5" width="2" height="9" fill="#000" stroke="#00ff00"/><path d="M67.5 82V97" stroke="#00ff00"/><rect x="66.5" y="82.5" width="2" height="10" fill="#fff" stroke="#00ff00"/><path d="M71.5 91V107" stroke="#00ff00"/><rect x="70.5" y="92.5" width="2" height="12" fill="#fff" stroke="#00ff00"/><path d="M75.5 75V105" stroke="#00ff00"/><rect x="74.5" y="80.5" width="2" height="24" fill="#000" stroke="#00ff00"/><path d="M79.5 78V81" stroke="#00ff00"/><rect x="78" y="80" width="3" height="1" fill="#00ff00"/><path d="M83.5 76V94" stroke="#00ff00"/><rect x="82.5" y="80.5" width="2" height="6" fill="#fff" stroke="#00ff00"/><path d="M87.5 78V88" stroke="#00ff00"/><rect x="86.5" y="79.5" width="2" height="7" fill="#000" stroke="#00ff00"/><path d="M91.5 78V85" stroke="#00ff00"/><rect x="90" y="79" width="3" height="2" fill="#00ff00"/><path d="M95.5 76V89" stroke="#00ff00"/><rect x="94.5" y="80.5" width="2" height="7" fill="#fff" stroke="#00ff00"/><path d="M99.5 85V95" stroke="#00ff00"/><rect x="98.5" y="87.5" width="2" height="2" fill="#fff" stroke="#00ff00"/><path d="M103.5 84V95" stroke="#00ff00"/><rect x="102" y="88" width="3" height="2" fill="#00ff00"/><path d="M107.5 83V93" stroke="#00ff00"/><rect x="106" y="87" width="3" height="2" fill="#00ff00"/><path d="M111.5 83V105" stroke="#00ff00"/><rect x="110.5" y="87.5" width="2" height="10" fill="#fff" stroke="#00ff00"/><path d="M115.5 95V108" stroke="#00ff00"/><rect x="114.5" y="97.5" width="2" height="7" fill="#fff" stroke="#00ff00"/><path d="M119.5 100V108" stroke="#00ff00"/><rect x="118" y="104" width="3" height="2" fill="#00ff00"/><path d="M123.5 99V108" stroke="#00ff00"/><rect x="122.5" y="103.5" width="2" height="2" fill="#000" stroke="#00ff00"/><path d="M127.5 99V112" stroke="#00ff00"/><rect x="126" y="102" width="3" height="2" fill="#00ff00"/><path d="M131.5 98V110" stroke="#00ff00"/><rect x="130.5" y="100.5" width="2" height="2" fill="#000" stroke="#00ff00"/><path d="M135.5 95V107" stroke="#00ff00"/><rect x="134" y="100" width="3" height="1" fill="#00ff00"/><path d="M139.5 80V105" stroke="#00ff00"/><rect x="138.5" y="86.5" width="2" height="14" fill="#000" stroke="#00ff00"/><path d="M143.5 80V89" stroke="#00ff00"/><rect x="142" y="86" width="3" height="1" fill="#00ff00"/><path d="M147.5 83V130" stroke="#00ff00"/><rect x="146.5" y="86.5" width="2" height="42" fill="#fff" stroke="#00ff00"/><path d="M151.5 118V129" stroke="#00ff00"/><rect x="150.5" y="124.5" width="2" height="4" fill="#000" stroke="#00ff00"/><path d="M155.5 118V135" stroke="#00ff00"/><rect x="154.5" y="124.5" width="2" height="6" fill="#fff" stroke="#00ff00"/><path d="M159.5 128V131" stroke="#00ff00"/><rect x="158.5" y="128.5" width="2" height="2" fill="#000" stroke="#00ff00"/><path d="M163.5 124V138" stroke="#00ff00"/><rect x="162.5" y="128.5" width="2" height="3" fill="#fff" stroke="#00ff00"/><path d="M167.5 125V134" stroke="#00ff00"/><rect x="166.5" y="126.5" width="2" height="5" fill="#000" stroke="#00ff00"/><path d="M171.5 121V133" stroke="#00ff00"/><rect x="170.5" y="122.5" width="2" height="4" fill="#000" stroke="#00ff00"/><path d="M175.5 109V123" stroke="#00ff00"/><rect x="174.5" y="115.5" width="2" height="7" fill="#000" stroke="#00ff00"/><path d="M179.5 107V121" stroke="#00ff00"/><rect x="178.5" y="112.5" width="2" height="3" fill="#000" stroke="#00ff00"/><path d="M183.5 102V117" stroke="#00ff00"/><rect x="182.5" y="106.5" width="2" height="6" fill="#000" stroke="#00ff00"/><path d="M187.5 100V109" stroke="#00ff00"/><rect x="186.5" y="104.5" width="2" height="2" fill="#000" stroke="#00ff00"/><path d="M191.5 99V107" stroke="#00ff00"/><rect x="190" y="104" width="3" height="1" fill="#00ff00"/><path d="M195.5 100V108" stroke="#00ff00"/><rect x="194" y="104" width="3" height="1" fill="#00ff00"/><path d="M199.5 100V108" stroke="#00ff00"/><rect x="198" y="104" width="3" height="1" fill="#00ff00"/><path d="M203.5 100V115" stroke="#00ff00"/><rect x="202.5" y="104.5" width="2" height="4" fill="#fff" stroke="#00ff00"/><path d="M207.5 92V110" stroke="#00ff00"/><rect x="206.5" y="96.5" width="2" height="12" fill="#000" stroke="#00ff00"/><path d="M211.5 91V97" stroke="#00ff00"/><rect x="210" y="96" width="3" height="1" fill="#00ff00"/><path d="M215.5 89V99" stroke="#00ff00"/><rect x="214.5" y="89.5" width="2" height="7" fill="#000" stroke="#00ff00"/><path d="M219.5 83V106" stroke="#00ff00"/><rect x="218.5" y="89.5" width="2" height="12" fill="#fff" stroke="#00ff00"/><path d="M223.5 91V121" stroke="#00ff00"/><rect x="222.5" y="101.5" width="2" height="17" fill="#fff" stroke="#00ff00"/><path d="M227.5 85V122" stroke="#00ff00"/><rect x="226.5" y="93.5" width="2" height="25" fill="#000" stroke="#00ff00"/><path d="M231.5 62V98" stroke="#00ff00"/><rect x="230.5" y="63.5" width="2" height="30" fill="#000" stroke="#00ff00"/><path d="M235.5 63V94" stroke="#00ff00"/><rect x="234.5" y="63.5" width="2" height="29" fill="#fff" stroke="#00ff00"/><path d="M239.5 76V94" stroke="#00ff00"/><rect x="238.5" y="81.5" width="2" height="11" fill="#000" stroke="#00ff00"/><path d="M243.5 51V84" stroke="#00ff00"/><rect x="242.5" y="62.5" width="2" height="19" fill="#000" stroke="#00ff00"/><path d="M247.5 48V69" stroke="#00ff00"/><rect x="246.5" y="53.5" width="2" height="9" fill="#000" stroke="#00ff00"/><path d="M251.5 48V58" stroke="#00ff00"/><rect x="250" y="53" width="3" height="1" fill="#00ff00"/><path d="M255.5 52V71" stroke="#00ff00"/><rect x="254.5" y="53.5" width="2" height="6" fill="#fff" stroke="#00ff00"/><path d="M259.5 58V71" stroke="#00ff00"/><rect x="258.5" y="59.5" width="2" height="10" fill="#fff" stroke="#00ff00"/><path d="M263.5 65V70" stroke="#00ff00"/><rect x="262" y="68" width="3" height="2" fill="#00ff00"/><path d="M267.5 66V72" stroke="#00ff00"/><rect x="266" y="67" width="3" height="2" fill="#00ff00"/><path d="M271.5 53V69" stroke="#00ff00"/><rect x="270.5" y="54.5" width="2" height="13" fill="#000" stroke="#00ff00"/><path d="M275.5 51V59" stroke="#00ff00"/><rect x="274" y="53" width="3" height="2" fill="#00ff00"/><path d="M279.5 40V55" stroke="#00ff00"/><rect x="278.5" y="41.5" width="2" height="12" fill="#000" stroke="#00ff00"/><path d="M283.5 37V51" stroke="#00ff00"/><rect x="282.5" y="41.5" width="2" height="6" fill="#fff" stroke="#00ff00"/><path d="M287.5 45V54" stroke="#00ff00"/><rect x="286.5" y="47.5" width="2" height="3" fill="#fff" stroke="#00ff00"/><path d="M291.5 46V52" stroke="#00ff00"/><rect x="290.5" y="47.5" width="2" height="3" fill="#000" stroke="#00ff00"/><path d="M295.5 40V49" stroke="#00ff00"/><rect x="294.5" y="43.5" width="2" height="4" fill="#000" stroke="#00ff00"/><path d="M299.5 42V53" stroke="#00ff00"/><rect x="298.5" y="43.5" width="2" height="4" fill="#fff" stroke="#00ff00"/><path d="M303.5 37V51" stroke="#00ff00"/><rect x="302" y="46" width="3" height="2" fill="#00ff00"/><path d="M307.5 44V67" stroke="#00ff00"/><rect x="306.5" y="46.5" width="2" height="10" fill="#fff" stroke="#00ff00"/><path d="M311.5 34V61" stroke="#00ff00"/><rect x="310.5" y="39.5" width="2" height="17" fill="#000" stroke="#00ff00"/><path d="M315.5 32V43" stroke="#00ff00"/><rect x="314" y="38" width="3" height="2" fill="#00ff00"/><path d="M319.5 34V55" stroke="#00ff00"/><rect x="318.5" y="38.5" width="2" height="12" fill="#fff" stroke="#00ff00"/><path d="M323.5 39V60" stroke="#00ff00"/><rect x="322.5" y="42.5" width="2" height="8" fill="#000" stroke="#00ff00"/><path d="M327.5 36V56" stroke="#00ff00"/><rect x="326.5" y="42.5" width="2" height="5" fill="#fff" stroke="#00ff00"/><path d="M331.5 45V65" stroke="#00ff00"/><rect x="330.5" y="47.5" width="2" height="16" fill="#fff" stroke="#00ff00"/><path d="M335.5 53V67" stroke="#00ff00"/><rect x="334.5" y="56.5" width="2" height="7" fill="#000" stroke="#00ff00"/><path d="M339.5 53V67" stroke="#00ff00"/><rect x="338.5" y="56.5" width="2" height="2" fill="#fff" stroke="#00ff00"/><path d="M343.5 53V64" stroke="#00ff00"/><rect x="342" y="58" width="3" height="2" fill="#00ff00"/><path d="M347.5 54V65" stroke="#00ff00"/><rect x="346" y="59" width="3" height="1" fill="#00ff00"/><path d="M351.5 48V63" stroke="#00ff00"/><rect x="350" y="58" width="3" height="2" fill="#00ff00"/><path d="M355.5 50V61" stroke="#00ff00"/><rect x="354" y="58" width="3" height="2" fill="#00ff00"/><path d="M359.5 54V65" stroke="#00ff00"/><rect x="358.5" y="59.5" width="2" height="2" fill="#fff" stroke="#00ff00"/><path d="M363.5 59V63" stroke="#00ff00"/><rect x="362.5" y="59.5" width="2" height="2" fill="#000" stroke="#00ff00"/><path d="M367.5 51V61" stroke="#00ff00"/><rect x="366.5" y="54.5" width="2" height="5" fill="#000" stroke="#00ff00"/><path d="M371.5 51V63" stroke="#00ff00"/><rect x="370.5" y="54.5" width="2" height="7" fill="#fff" stroke="#00ff00"/><path d="M375.5 59V65" stroke="#00ff00"/><rect x="374.5" y="61.5" width="2" height="2" fill="#fff" stroke="#00ff00"/><path d="M379.5 58V65" stroke="#00ff00"/><rect x="378.5" y="61.5" width="2" height="2" fill="#000" stroke="#00ff00"/><path d="M383.5 59V75" stroke="#00ff00"/><rect x="382.5" y="61.5" width="2" height="13" fill="#fff" stroke="#00ff00"/><path d="M387.5 64V76" stroke="#00ff00"/><rect x="386.5" y="68.5" width="2" height="6" fill="#000" stroke="#00ff00"/><path d="M391.5 64V70" stroke="#00ff00"/><rect x="390" y="68" width="3" height="2" fill="#00ff00"/><path d="M395.5 54V74" stroke="#00ff00"/><rect x="394.5" y="56.5" width="2" height="13" fill="#000" stroke="#00ff00"/><path d="M399.5 56V63" stroke="#00ff00"/><rect x="398.5" y="56.5" width="2" height="6" fill="#fff" stroke="#00ff00"/><path d="M403.5 61V67" stroke="#00ff00"/><rect x="402" y="62" width="3" height="1" fill="#00ff00"/><path d="M407.5 50V64" stroke="#00ff00"/><rect x="406.5" y="53.5" width="2" height="9" fill="#000" stroke="#00ff00"/><path d="M411.5 38V56" stroke="#00ff00"/><rect x="410.5" y="50.5" width="2" height="3" fill="#000" stroke="#00ff00"/><path d="M415.5 43V58" stroke="#00ff00"/><rect x="414.5" y="45.5" width="2" height="5" fill="#000" stroke="#00ff00"/><path d="M419.5 44V59" stroke="#00ff00"/><rect x="418.5" y="45.5" width="2" height="10" fill="#fff" stroke="#00ff00"/><path d="M423.5 55V70" stroke="#00ff00"/><rect x="422.5" y="55.5" width="2" height="8" fill="#fff" stroke="#00ff00"/><path d="M427.5 60V71" stroke="#00ff00"/><rect x="426" y="63" width="3" height="1" fill="#00ff00"/><path d="M431.5 44V71" stroke="#00ff00"/><rect x="430.5" y="47.5" width="2" height="16" fill="#000" stroke="#00ff00"/><path d="M435.5 45V49" stroke="#00ff00"/><rect x="434" y="47" width="3" height="2" fill="#00ff00"/><path d="M439.5 47V56" stroke="#00ff00"/><rect x="438.5" y="48.5" width="2" height="7" fill="#fff" stroke="#00ff00"/><path d="M443.5 43V58" stroke="#00ff00"/><rect x="442.5" y="48.5" width="2" height="7" fill="#000" stroke="#00ff00"/><path d="M447.5 41V51" stroke="#00ff00"/><rect x="446.5" y="46.5" width="2" height="2" fill="#000" stroke="#00ff00"/><path d="M451.5 37V48" stroke="#00ff00"/><rect x="450.5" y="40.5" width="2" height="6" fill="#000" stroke="#00ff00"/><path d="M455.5 36V42" stroke="#00ff00"/><rect x="454" y="40" width="3" height="2" fill="#00ff00"/><path d="M459.5 40V47" stroke="#00ff00"/><rect x="458" y="41" width="3" height="2" fill="#00ff00"/><path d="M463.5 40V48" stroke="#00ff00"/><rect x="462.5" y="42.5" width="2" height="4" fill="#fff" stroke="#00ff00"/><path d="M467.5 41V55" stroke="#00ff00"/><rect x="466.5" y="46.5" width="2" height="4" fill="#fff" stroke="#00ff00"/><path d="M471.5 50V60" stroke="#00ff00"/><rect x="470.5" y="50.5" width="2" height="5" fill="#fff" stroke="#00ff00"/><path d="M475.5 53V56" stroke="#00ff00"/><rect x="474" y="55" width="3" height="1" fill="#00ff00"/><path d="M479.5 50V58" stroke="#00ff00"/><rect x="478" y="55" width="3" height="1" fill="#00ff00"/><path d="M483.5 24V58" stroke="#00ff00"/><rect x="482.5" y="28.5" width="2" height="27" fill="#000" stroke="#00ff00"/><path d="M487.5 13V31" stroke="#00ff00"/><rect x="486.5" y="22.5" width="2" height="6" fill="#000" stroke="#00ff00"/><path d="M491.5 15V35" stroke="#00ff00"/><rect x="490.5" y="22.5" width="2" height="8" fill="#fff" stroke="#00ff00"/><path d="M495.5 26V69" stroke="#00ff00"/><rect x="494.5" y="30.5" width="2" height="23" fill="#fff" stroke="#00ff00"/><path d="M499.5 51V75" stroke="#00ff00"/><rect x="498.5" y="53.5" width="2" height="10" fill="#fff" stroke="#00ff00"/><path d="M503.5 58V65" stroke="#00ff00"/><rect x="502" y="62" width="3" height="2" fill="#00ff00"/><path d="M507.5 61V66" stroke="#00ff00"/><rect x="506" y="62" width="3" height="1" fill="#00ff00"/><path d="M511.5 57V94" stroke="#00ff00"/><rect x="510.5" y="62.5" width="2" height="25" fill="#fff" stroke="#00ff00"/><path d="M515.5 86V119" stroke="#00ff00"/><rect x="514.5" y="87.5" width="2" height="27" fill="#fff" stroke="#00ff00"/><path d="M519.5 111V125" stroke="#00ff00"/><rect x="518.5" y="114.5" width="2" height="8" fill="#fff" stroke="#00ff00"/><path d="M523.5 117V131" stroke="#00ff00"/><rect x="522.5" y="122.5" width="2" height="8" fill="#fff" stroke="#00ff00"/><path d="M527.5 127V133" stroke="#00ff00"/><rect x="526.5" y="127.5" width="2" height="3" fill="#000" stroke="#00ff00"/><path d="M531.5 124V148" stroke="#00ff00"/><rect x="530.5" y="127.5" width="2" height="16" fill="#fff" stroke="#00ff00"/><path d="M535.5 142V155" stroke="#00ff00"/><rect x="534.5" y="143.5" width="2" height="7" fill="#fff" stroke="#00ff00"/><path d="M539.5 135V154" stroke="#00ff00"/><rect x="538.5" y="137.5" width="2" height="13" fill="#000" stroke="#00ff00"/><path d="M543.5 131V140" stroke="#00ff00"/><rect x="542" y="136" width="3" height="2" fill="#00ff00"/><path d="M547.5 134V138" stroke="#00ff00"/><rect x="546" y="136" width="3" height="2" fill="#00ff00"/><path d="M551.5 136V167" stroke="#00ff00"/><rect x="550.5" y="137.5" width="2" height="8" fill="#fff" stroke="#00ff00"/><path d="M555.5 144V165" stroke="#00ff00"/><rect x="554.5" y="145.5" width="2" height="17" fill="#fff" stroke="#00ff00"/><path d="M559.5 138V163" stroke="#00ff00"/><rect x="558.5" y="139.5" width="2" height="23" fill="#000" stroke="#00ff00"/><path d="M563.5 132V143" stroke="#00ff00"/><rect x="562.5" y="133.5" width="2" height="6" fill="#000" stroke="#00ff00"/><path d="M567.5 120V138" stroke="#00ff00"/><rect x="566.5" y="124.5" width="2" height="9" fill="#000" stroke="#00ff00"/><path d="M571.5 119V128" stroke="#00ff00"/><rect x="570.5" y="119.5" width="2" height="5" fill="#000" stroke="#00ff00"/><path d="M575.5 113V122" stroke="#00ff00"/><rect x="574" y="118" width="3" height="2" fill="#00ff00"/><path d="M579.5 113V123" stroke="#00ff00"/><rect x="578.5" y="118.5" width="2" height="4" fill="#fff" stroke="#00ff00"/><path d="M583.5 108V123" stroke="#00ff00"/><rect x="582.5" y="113.5" width="2" height="9" fill="#000" stroke="#00ff00"/><path d="M587.5 110V116" stroke="#00ff00"/><rect x="586" y="113" width="3" height="2" fill="#00ff00"/><path d="M591.5 104V116" stroke="#00ff00"/><rect x="590.5" y="107.5" width="2" height="7" fill="#000" stroke="#00ff00"/><path d="M595.5 104V112" stroke="#00ff00"/><rect x="594.5" y="107.5" width="2" height="2" fill="#fff" stroke="#00ff00"/><path d="M599.5 109V120" stroke="#00ff00"/><rect x="598.5" y="109.5" width="2" height="7" fill="#fff" stroke="#00ff00"/><path d="M603.5 113V143" stroke="#00ff00"/><rect x="602.5" y="116.5" width="2" height="23" fill="#fff" stroke="#00ff00"/><path d="M607.5 132V140" stroke="#00ff00"/><rect x="606.5" y="137.5" width="2" height="2" fill="#000" stroke="#00ff00"/><path d="M611.5 114V144" stroke="#00ff00"/><rect x="610.5" y="119.5" width="2" height="18" fill="#000" stroke="#00ff00"/><path d="M615.5 118V121" stroke="#00ff00"/><rect x="614" y="119" width="3" height="1" fill="#00ff00"/><path d="M619.5 82V121" stroke="#00ff00"/><rect x="618.5" y="97.5" width="2" height="22" fill="#000" stroke="#00ff00"/><path d="M623.5 82V101" stroke="#00ff00"/><rect x="622.5" y="92.5" width="2" height="5" fill="#000" stroke="#00ff00"/><path d="M627.5 85V94" stroke="#00ff00"/><rect x="626" y="91" width="3" height="2" fill="#00ff00"/><path d="M631.5 87V96" stroke="#00ff00"/><rect x="630" y="91" width="3" height="1" fill="#00ff00"/><path d="M635.5 88V101" stroke="#00ff00"/><rect x="634.5" y="91.5" width="2" height="7" fill="#fff" stroke="#00ff00"/><path d="M639.5 91V103" stroke="#00ff00"/><rect x="638.5" y="92.5" width="2" height="6" fill="#000" stroke="#00ff00"/><path d="M643.5 88V97" stroke="#00ff00"/><rect x="642.5" y="92.5" width="2" height="3" fill="#fff" stroke="#00ff00"/><path d="M647.5 95V97" stroke="#00ff00"/><rect x="646" y="95" width="3" height="2" fill="#00ff00"/><path d="M651.5 91V98" stroke="#00ff00"/><rect x="650" y="96" width="3" height="2" fill="#00ff00"/><path d="M655.5 82V99" stroke="#00ff00"/><rect x="654.5" y="86.5" width="2" height="11" fill="#000" stroke="#00ff00"/><path d="M659.5 80V89" stroke="#00ff00"/><rect x="658" y="86" width="3" height="2" fill="#00ff00"/><path d="M663.5 86V94" stroke="#00ff00"/><rect x="662.5" y="87.5" width="2" height="6" fill="#fff" stroke="#00ff00"/><path d="M667.5 91V95" stroke="#00ff00"/><rect x="666" y="93" width="3" height="1" fill="#00ff00"/><path d="M671.5 91V98" stroke="#00ff00"/><rect x="670" y="93" width="3" height="1" fill="#00ff00"/><path d="M675.5 92V102" stroke="#00ff00"/><rect x="674.5" y="93.5" width="2" height="4" fill="#fff" stroke="#00ff00"/><path d="M679.5 94V104" stroke="#00ff00"/><rect x="678" y="96" width="3" height="2" fill="#00ff00"/><path d="M683.5 81V100" stroke="#00ff00"/><rect x="682.5" y="85.5" width="2" height="11" fill="#000" stroke="#00ff00"/><path d="M687.5 83V86" stroke="#00ff00"/><rect x="686" y="84" width="3" height="2" fill="#00ff00"/><path d="M691.5 79V92" stroke="#00ff00"/><rect x="690.5" y="84.5" width="2" height="5" fill="#fff" stroke="#00ff00"/><path d="M695.5 86V94" stroke="#00ff00"/><rect x="694" y="89" width="3" height="1" fill="#00ff00"/><path d="M699.5 77V93" stroke="#00ff00"/><rect x="698.5" y="81.5" width="2" height="8" fill="#000" stroke="#00ff00"/><path d="M703.5 77V88" stroke="#00ff00"/><rect x="702.5" y="81.5" width="2" height="5" fill="#fff" stroke="#00ff00"/><path d="M707.5 84V122" stroke="#00ff00"/><rect x="706.5" y="86.5" width="2" height="28" fill="#fff" stroke="#00ff00"/><path d="M711.5 110V133" stroke="#00ff00"/><rect x="710.5" y="114.5" width="2" height="15" fill="#fff" stroke="#00ff00"/><path d="M715.5 83V133" stroke="#00ff00"/><rect x="714.5" y="83.5" width="2" height="46" fill="#000" stroke="#00ff00"/><path d="M719.5 77V88" stroke="#00ff00"/><rect x="718" y="83" width="3" height="1" fill="#00ff00"/><path d="M723.5 83V87" stroke="#00ff00"/><rect x="722.5" y="83.5" width="2" height="2" fill="#fff" stroke="#00ff00"/><path d="M727.5 84V88" stroke="#00ff00"/><rect x="726" y="85" width="3" height="2" fill="#00ff00"/><path d="M731.5 83V96" stroke="#00ff00"/><rect x="730.5" y="86.5" width="2" height="5" fill="#fff" stroke="#00ff00"/><path d="M735.5 85V97" stroke="#00ff00"/><rect x="734" y="90" width="3" height="2" fill="#00ff00"/><path d="M739.5 86V95" stroke="#00ff00"/><rect x="738.5" y="90.5" width="2" height="4" fill="#fff" stroke="#00ff00"/><path d="M743.5 85V99" stroke="#00ff00"/><rect x="742.5" y="87.5" width="2" height="7" fill="#000" stroke="#00ff00"/><path d="M747.5 79V92" stroke="#00ff00"/><rect x="746.5" y="83.5" width="2" height="4" fill="#000" stroke="#00ff00"/><path d="M751.5 80V84" stroke="#00ff00"/><rect x="750" y="83" width="3" height="1" fill="#00ff00"/><path d="M755.5 70V84" stroke="#00ff00"/><rect x="754.5" y="74.5" width="2" height="9" fill="#000" stroke="#00ff00"/><path d="M759.5 73V76" stroke="#00ff00"/><rect x="758" y="74" width="3" height="1" fill="#00ff00"/><path d="M763.5 72V75" stroke="#00ff00"/><rect x="762" y="74" width="3" height="1" fill="#00ff00"/><path d="M767.5 72V79" stroke="#00ff00"/><rect x="766.5" y="72.5" width="2" height="2" fill="#000" stroke="#00ff00"/><path d="M771.5 69V81" stroke="#00ff00"/><rect x="770.5" y="72.5" width="2" height="4" fill="#fff" stroke="#00ff00"/><path d="M775.5 76V78" stroke="#00ff00"/><rect x="774" y="76" width="3" height="2" fill="#00ff00"/><path d="M779.5 59V84" stroke="#00ff00"/><rect x="778.5" y="62.5" width="2" height="15" fill="#000" stroke="#00ff00"/><path d="M783.5 58V71" stroke="#00ff00"/><rect x="782.5" y="62.5" width="2" height="4" fill="#fff" stroke="#00ff00"/><path d="M787.5 55V71" stroke="#00ff00"/><rect x="786.5" y="59.5" width="2" height="7" fill="#000" stroke="#00ff00"/><path d="M791.5 58V63" stroke="#00ff00"/><rect x="790" y="59" width="3" height="2" fill="#00ff00"/><path d="M795.5 56V65" stroke="#00ff00"/><rect x="794" y="59" width="3" height="2" fill="#00ff00"/><path d="M799.5 55V63" stroke="#00ff00"/><rect x="798" y="59" width="3" height="1" fill="#00ff00"/><path d="M803.5 44V61" stroke="#00ff00"/><rect x="802.5" y="44.5" width="2" height="15" fill="#000" stroke="#00ff00"/><path d="M807.5 32V49" stroke="#00ff00"/><rect x="806.5" y="37.5" width="2" height="7" fill="#000" stroke="#00ff00"/><path d="M811.5 35V45" stroke="#00ff00"/><rect x="810.5" y="37.5" width="2" height="3" fill="#fff" stroke="#00ff00"/><path d="M815.5 36V44" stroke="#00ff00"/><rect x="814.5" y="37.5" width="2" height="3" fill="#000" stroke="#00ff00"/><path d="M819.5 35V41" stroke="#00ff00"/><rect x="818" y="36" width="3" height="2" fill="#00ff00"/><path d="M823.5 28V40" stroke="#00ff00"/><rect x="822.5" y="32.5" width="2" height="4" fill="#000" stroke="#00ff00"/><path d="M827.5 23V35" stroke="#00ff00"/><rect x="826.5" y="27.5" width="2" height="5" fill="#000" stroke="#00ff00"/><path d="M831.5 27V30" stroke="#00ff00"/><rect x="830" y="27" width="3" height="2" fill="#00ff00"/><path d="M835.5 25V31" stroke="#00ff00"/><rect x="834.5" y="28.5" width="2" height="2" fill="#fff" stroke="#00ff00"/><path d="M839.5 29V34" stroke="#00ff00"/><rect x="838" y="30" width="3" height="2" fill="#00ff00"/><path d="M843.5 28V33" stroke="#00ff00"/><rect x="842.5" y="28.5" width="2" height="3" fill="#000" stroke="#00ff00"/><path d="M847.5 23V40" stroke="#00ff00"/><rect x="846.5" y="28.5" width="2" height="9" fill="#fff" stroke="#00ff00"/><path d="M851.5 36V63" stroke="#00ff00"/><rect x="850.5" y="37.5" width="2" height="16" fill="#fff" stroke="#00ff00"/><path d="M855.5 50V57" stroke="#00ff00"/><rect x="854.5" y="51.5" width="2" height="2" fill="#000" stroke="#00ff00"/><path d="M859.5 50V65" stroke="#00ff00"/><rect x="858.5" y="51.5" width="2" height="9" fill="#fff" stroke="#00ff00"/><path d="M863.5 57V66" stroke="#00ff00"/><rect x="862" y="60" width="3" height="1" fill="#00ff00"/><path d="M867.5 55V62" stroke="#00ff00"/><rect x="866.5" y="56.5" width="2" height="4" fill="#000" stroke="#00ff00"/><path d="M871.5 46V60" stroke="#00ff00"/><rect x="870" y="55" width="3" height="2" fill="#00ff00"/><path d="M875.5 48V66" stroke="#00ff00"/><rect x="874" y="54" width="3" height="2" fill="#00ff00"/><path d="M879.5 49V66" stroke="#00ff00"/><rect x="878.5" y="51.5" width="2" height="3" fill="#000" stroke="#00ff00"/><path d="M883.5 41V54" stroke="#00ff00"/><rect x="882" y="50" width="3" height="2" fill="#00ff00"/><path d="M887.5 48V65" stroke="#00ff00"/><rect x="886.5" y="50.5" width="2" height="4" fill="#fff" stroke="#00ff00"/><path d="M891.5 35V57" stroke="#00ff00"/><rect x="890.5" y="38.5" width="2" height="16" fill="#000" stroke="#00ff00"/><path d="M895.5 36V57" stroke="#00ff00"/><rect x="894.5" y="38.5" width="2" height="14" fill="#fff" stroke="#00ff00"/></svg>
<div class="abs" style="left:191px;top:101px;width:1128px;height:169px;border:1px solid #fff"></div>
<div class="abs" style="left:192px;top:270px;width:1px;height:3px;background:#fff"></div>
<div class="abs" style="left:256px;top:270px;width:1px;height:3px;background:#fff"></div>
<div class="abs" style="left:320px;top:270px;width:1px;height:3px;background:#fff"></div>
<div class="abs" style="left:384px;top:270px;width:1px;height:3px;background:#fff"></div>
<div class="abs" style="left:448px;top:270px;width:1px;height:3px;background:#fff"></div>
<div class="abs" style="left:512px;top:270px;width:1px;height:3px;background:#fff"></div>
<div class="abs" style="left:576px;top:270px;width:1px;height:3px;background:#fff"></div>
<div class="abs" style="left:640px;top:270px;width:1px;height:3px;background:#fff"></div>
<div class="abs" style="left:704px;top:270px;width:1px;height:3px;background:#fff"></div>
<div class="abs" style="left:768px;top:270px;width:1px;height:3px;background:#fff"></div>
<div class="abs" style="left:832px;top:270px;width:1px;height:3px;background:#fff"></div>
<div class="abs" style="left:896px;top:270px;width:1px;height:3px;background:#fff"></div>
<div class="abs" style="left:960px;top:270px;width:1px;height:3px;background:#fff"></div>
<div class="abs" style="left:1024px;top:270px;width:1px;height:3px;background:#fff"></div>
<div class="abs" style="left:1319px;top:134px;width:2px;height:1px;background:#fff"></div>
<div class="abs" style="left:1319px;top:167px;width:2px;height:1px;background:#fff"></div>
<div class="abs" style="left:1319px;top:200px;width:2px;height:1px;background:#fff"></div>
<div class="abs" style="left:1319px;top:233px;width:2px;height:1px;background:#fff"></div>
<div class="abs" style="left:1319px;top:266px;width:2px;height:1px;background:#fff"></div>
<div class="t" style="left:191px;top:274px;font-size:10px;color:#fff;letter-spacing:-0.4px">24 Dec 2018</div>
<div class="t" style="left:255px;top:274px;font-size:10px;color:#fff;letter-spacing:-0.4px">24 Dec 23:00</div>
<div class="t" style="left:319px;top:274px;font-size:10px;color:#fff;letter-spacing:-0.4px">26 Dec 15:00</div>
<div class="t" style="left:383px;top:274px;font-size:10px;color:#fff;letter-spacing:-0.4px">27 Dec 07:00</div>
<div class="t" style="left:447px;top:274px;font-size:10px;color:#fff;letter-spacing:-0.4px">27 Dec 23:00</div>
<div class="t" style="left:511px;top:274px;font-size:10px;color:#fff;letter-spacing:-0.4px">28 Dec 15:00</div>
<div class="t" style="left:575px;top:274px;font-size:10px;color:#fff;letter-spacing:-0.4px">31 Dec 07:00</div>
<div class="t" style="left:639px;top:274px;font-size:10px;color:#fff;letter-spacing:-0.4px">31 Dec 23:00</div>
<div class="t" style="left:703px;top:274px;font-size:10px;color:#fff;letter-spacing:-0.4px">2 Jan 15:00</div>
<div class="t" style="left:767px;top:274px;font-size:10px;color:#fff;letter-spacing:-0.4px">3 Jan 07:00</div>
<div class="t" style="left:831px;top:274px;font-size:10px;color:#fff;letter-spacing:-0.4px">3 Jan 23:00</div>
<div class="t" style="left:895px;top:274px;font-size:10px;color:#fff;letter-spacing:-0.4px">4 Jan 15:00</div>
<div class="t" style="left:959px;top:274px;font-size:10px;color:#fff;letter-spacing:-0.4px">7 Jan 07:00</div>
<div class="t" style="left:1023px;top:274px;font-size:10px;color:#fff;letter-spacing:-0.4px">7 Jan 23:00</div>
<div class="t" style="left:1324px;top:131px;font-size:10px;color:#fff;letter-spacing:-0.5px">1.14680</div>
<div class="t" style="left:1324px;top:164px;font-size:10px;color:#fff;letter-spacing:-0.5px">1.14270</div>
<div class="t" style="left:1324px;top:197px;font-size:10px;color:#fff;letter-spacing:-0.5px">1.13860</div>
<div class="t" style="left:1324px;top:230px;font-size:10px;color:#fff;letter-spacing:-0.5px">1.13450</div>
<div class="t" style="left:1324px;top:263px;font-size:10px;color:#fff;letter-spacing:-0.5px">1.13040</div>
<div class="abs" style="left:1320px;top:145px;width:41px;height:11px;background:#fff"></div>
<div class="t" style="left:1324px;top:146px;font-size:10px;color:#000;letter-spacing:-0.5px">1.14475</div>
<div class="t" style="right:158px;top:118px;font-family:'Liberation Serif',serif;font-size:18.6px;color:#ffff00">Trades</div>
<div class="t" style="right:158px;top:138px;font-family:'Liberation Serif',serif;font-size:18.6px;color:#ffff00">Lots</div>
<div class="t" style="right:157px;top:158px;font-family:'Liberation Serif',serif;font-size:18.6px;color:#ffff00">Profit</div>
<div class="t" style="right:69px;top:118px;font-family:'Liberation Serif',serif;font-size:18.6px;color:#ffff00">0</div>
<div class="t" style="right:69px;top:138px;font-family:'Liberation Serif',serif;font-size:18.6px;color:#ffff00">0.00</div>
<div class="t" style="right:69px;top:158px;font-family:'Liberation Serif',serif;font-size:18.6px;color:#00ff00">0.00</div>
<svg style="left:1086px;top:101px" width="10" height="6"><path d="M0 0H10L5 5Z" fill="#a0a8b0"/></svg>
<div class="abs" style="left:188px;top:290px;width:1176px;height:2px;background:#fff"></div>
<div class="abs" style="left:188px;top:292px;width:1178px;height:1px;background:#000"></div>
<div class="abs" style="left:188px;top:293px;width:1178px;height:20px;background:#f0f0f0"></div>
<div class="abs" style="left:188px;top:292px;width:1px;height:21px;background:#696969"></div>
<div class="t" style="left:204px;top:297px;font-size:11.5px;color:#6d6d7d;letter-spacing:-0.45px">EURUSD,H4</div>
<div class="t" style="left:287px;top:297px;font-size:11.5px;color:#6d6d7d;letter-spacing:-0.45px">USDCHF,H4</div>
<div class="t" style="left:372px;top:297px;font-size:11.5px;color:#6d6d7d;letter-spacing:-0.45px">GBPUSD,H4</div>
<div class="t" style="left:456px;top:297px;font-size:11.5px;color:#6d6d7d;letter-spacing:-0.45px">USDJPY,H4</div>
<div class="abs" style="left:277px;top:295px;width:1px;height:13px;background:#777"></div>
<div class="abs" style="left:362px;top:295px;width:1px;height:13px;background:#777"></div>
<div class="abs" style="left:445px;top:295px;width:1px;height:13px;background:#777"></div>
<div class="abs" style="left:525px;top:290px;width:124px;height:20px;background:#fff"></div>
<div class="abs" style="left:525px;top:292px;width:1px;height:19px;background:#000"></div>
<div class="abs" style="left:525px;top:310px;width:124px;height:1px;background:#000"></div>
<div class="abs" style="left:648px;top:292px;width:1px;height:19px;background:#000"></div>
<div class="abs" style="left:526px;top:311px;width:124px;height:1px;background:#c0c0c0"></div>
<div class="t" style="left:536px;top:297px;font-size:11.5px;letter-spacing:-0.3px">EURUSD,H1 (visual)</div>
<svg style="left:1332px;top:297px" width="30" height="9"><path d="M5 0V9L0 4.5Z" fill="#a0a0a0"/><path d="M20 0V9L25 4.5Z" fill="#a0a0a0"/></svg>
<div class="abs" style="left:0px;top:309px;width:188px;height:1px;background:#fff"></div>
<div class="abs" style="left:0px;top:311px;width:188px;height:1px;background:#a0a0a0"></div>
<div class="abs" style="left:0px;top:313px;width:1366px;height:1px;background:#fff"></div>
<div class="abs" style="left:0px;top:316px;width:1366px;height:1px;background:#a0a0a0"></div>
<div class="abs" style="left:0px;top:317px;width:1366px;height:388px;background:#f0f0f0"></div>
<svg style="left:4px;top:318px" width="6" height="6"><path d="M0 0L6 6M6 0L0 6" stroke="#000" stroke-width="1.7"/></svg>
<div class="abs" style="left:1px;top:330px;width:13px;height:372px;background:#b4cce4"></div>
<div class="t" style="left:-7px;top:677px;font-size:12.5px;letter-spacing:-0.75px;transform:rotate(-90deg);transform-origin:center;width:30px;height:14px;line-height:14px">Tester</div>
<div class="abs" style="left:14px;top:317px;width:1px;height:363px;background:#a0a0a0"></div>
<div class="abs" style="left:15px;top:317px;width:1330px;height:24px;background:#fff"></div>
<div class="abs" style="left:175px;top:317px;width:1px;height:24px;background:#e5e5e5"></div>
<div class="t" style="left:22px;top:323px;font-size:12px;letter-spacing:-0.2px">Time</div>
<div class="t" style="left:182px;top:323px;font-size:12px;letter-spacing:-0.2px">Message</div>
<div class="abs" style="left:15px;top:341px;width:1330px;height:19px;background:#e9e9e9"></div>
<div class="abs" style="left:15px;top:360px;width:1330px;height:1px;background:#c8c8c8"></div>
<div class="abs" style="left:174px;top:341px;width:1px;height:19px;background:#c8c8c8"></div>
<svg style="left:20px;top:345px" width="13" height="11"><path d="M6.5 0.5L12.5 10.5H0.5Z" fill="#e85c14" stroke="#b83c08" stroke-width="1" stroke-linejoin="round"/><path d="M6.5 2.8L10.6 9.5H2.4Z" fill="none" stroke="#ffc8a0" stroke-width="0.8"/><path d="M6.5 4.5V7" stroke="#702000" stroke-width="1"/><rect x="6" y="8" width="1" height="1" fill="#702000"/></svg>
<div class="t" style="left:38px;top:345px;font-size:12px;letter-spacing:-0.62px">2019.03.30 09:20:07.103</div>
<div class="t" style="left:180px;top:345px;font-size:12px;letter-spacing:-0.55px">2019.01.08 14:56:00</div>
<div class="t" style="left:285px;top:345px;font-size:12px;letter-spacing:-0.38px">GridIncrease_goold-EA EURUSD,H1: OrderSend error 131</div>
<div class="abs" style="left:15px;top:361px;width:1330px;height:19px;background:#fff"></div>
<div class="abs" style="left:15px;top:380px;width:1330px;height:1px;background:#c8c8c8"></div>
<div class="abs" style="left:174px;top:361px;width:1px;height:19px;background:#c8c8c8"></div>
<svg style="left:20px;top:365px" width="13" height="11"><path d="M6.5 0.5L12.5 10.5H0.5Z" fill="#e85c14" stroke="#b83c08" stroke-width="1" stroke-linejoin="round"/><path d="M6.5 2.8L10.6 9.5H2.4Z" fill="none" stroke="#ffc8a0" stroke-width="0.8"/><path d="M6.5 4.5V7" stroke="#702000" stroke-width="1"/><rect x="6" y="8" width="1" height="1" fill="#702000"/></svg>
<div class="t" style="left:38px;top:365px;font-size:12px;letter-spacing:-0.62px">2019.03.30 09:20:07.103</div>
<div class="t" style="left:180px;top:365px;font-size:12px;letter-spacing:-0.55px">2019.01.08 14:56:00</div>
<div class="t" style="left:285px;top:365px;font-size:12px;letter-spacing:-0.38px">GridIncrease_goold-EA EURUSD,H1: OrderSend error 131</div>
<div class="abs" style="left:15px;top:381px;width:1330px;height:19px;background:#e9e9e9"></div>
<div class="abs" style="left:15px;top:400px;width:1330px;height:1px;background:#c8c8c8"></div>
<div class="abs" style="left:174px;top:381px;width:1px;height:19px;background:#c8c8c8"></div>
<svg style="left:20px;top:385px" width="13" height="11"><path d="M6.5 0.5L12.5 10.5H0.5Z" fill="#e85c14" stroke="#b83c08" stroke-width="1" stroke-linejoin="round"/><path d="M6.5 2.8L10.6 9.5H2.4Z" fill="none" stroke="#ffc8a0" stroke-width="0.8"/><path d="M6.5 4.5V7" stroke="#702000" stroke-width="1"/><rect x="6" y="8" width="1" height="1" fill="#702000"/></svg>
<div class="t" style="left:38px;top:385px;font-size:12px;letter-spacing:-0.62px">2019.03.30 09:20:07.103</div>
<div class="t" style="left:180px;top:385px;font-size:12px;letter-spacing:-0.55px">2019.01.08 14:56:00</div>
<div class="t" style="left:285px;top:385px;font-size:12px;letter-spacing:-0.38px">GridIncrease_goold-EA EURUSD,H1: OrderSend error 131</div>
<div class="abs" style="left:15px;top:401px;width:1330px;height:19px;background:#fff"></div>
<div class="abs" style="left:15px;top:420px;width:1330px;height:1px;background:#c8c8c8"></div>
<div class="abs" style="left:174px;top:401px;width:1px;height:19px;background:#c8c8c8"></div>
<svg style="left:20px;top:405px" width="13" height="11"><path d="M6.5 0.5L12.5 10.5H0.5Z" fill="#e85c14" stroke="#b83c08" stroke-width="1" stroke-linejoin="round"/><path d="M6.5 2.8L10.6 9.5H2.4Z" fill="none" stroke="#ffc8a0" stroke-width="0.8"/><path d="M6.5 4.5V7" stroke="#702000" stroke-width="1"/><rect x="6" y="8" width="1" height="1" fill="#702000"/></svg>
<div class="t" style="left:38px;top:405px;font-size:12px;letter-spacing:-0.62px">2019.03.30 09:20:07.103</div>
<div class="t" style="left:180px;top:405px;font-size:12px;letter-spacing:-0.55px">2019.01.08 14:56:00</div>
<div class="t" style="left:285px;top:405px;font-size:12px;letter-spacing:-0.38px">GridIncrease_goold-EA EURUSD,H1: OrderSend error 131</div>
<div class="abs" style="left:15px;top:421px;width:1330px;height:19px;background:#e9e9e9"></div>
<div class="abs" style="left:15px;top:440px;width:1330px;height:1px;background:#c8c8c8"></div>
<div class="abs" style="left:174px;top:421px;width:1px;height:19px;background:#c8c8c8"></div>
<svg style="left:20px;top:425px" width="13" height="11"><path d="M6.5 0.5L12.5 10.5H0.5Z" fill="#e85c14" stroke="#b83c08" stroke-width="1" stroke-linejoin="round"/><path d="M6.5 2.8L10.6 9.5H2.4Z" fill="none" stroke="#ffc8a0" stroke-width="0.8"/><path d="M6.5 4.5V7" stroke="#702000" stroke-width="1"/><rect x="6" y="8" width="1" height="1" fill="#702000"/></svg>
<div class="t" style="left:38px;top:425px;font-size:12px;letter-spacing:-0.62px">2019.03.30 09:20:07.103</div>
<div class="t" style="left:180px;top:425px;font-size:12px;letter-spacing:-0.55px">2019.01.08 14:55:59</div>
<div class="t" style="left:285px;top:425px;font-size:12px;letter-spacing:-0.38px">GridIncrease_goold-EA EURUSD,H1: OrderSend error 131</div>
<div class="abs" style="left:15px;top:441px;width:1330px;height:19px;background:#fff"></div>
<div class="abs" style="left:15px;top:460px;width:1330px;height:1px;background:#c8c8c8"></div>
<div class="abs" style="left:174px;top:441px;width:1px;height:19px;background:#c8c8c8"></div>
<svg style="left:20px;top:445px" width="13" height="11"><path d="M6.5 0.5L12.5 10.5H0.5Z" fill="#e85c14" stroke="#b83c08" stroke-width="1" stroke-linejoin="round"/><path d="M6.5 2.8L10.6 9.5H2.4Z" fill="none" stroke="#ffc8a0" stroke-width="0.8"/><path d="M6.5 4.5V7" stroke="#702000" stroke-width="1"/><rect x="6" y="8" width="1" height="1" fill="#702000"/></svg>
<div class="t" style="left:38px;top:445px;font-size:12px;letter-spacing:-0.62px">2019.03.30 09:20:07.103</div>
<div class="t" style="left:180px;top:445px;font-size:12px;letter-spacing:-0.55px">2019.01.08 14:55:59</div>
<div class="t" style="left:285px;top:445px;font-size:12px;letter-spacing:-0.38px">GridIncrease_goold-EA EURUSD,H1: OrderSend error 131</div>
<div class="abs" style="left:15px;top:461px;width:1330px;height:19px;background:#e9e9e9"></div>
<div class="abs" style="left:15px;top:480px;width:1330px;height:1px;background:#c8c8c8"></div>
<div class="abs" style="left:174px;top:461px;width:1px;height:19px;background:#c8c8c8"></div>
<svg style="left:20px;top:465px" width="13" height="11"><path d="M6.5 0.5L12.5 10.5H0.5Z" fill="#e85c14" stroke="#b83c08" stroke-width="1" stroke-linejoin="round"/><path d="M6.5 2.8L10.6 9.5H2.4Z" fill="none" stroke="#ffc8a0" stroke-width="0.8"/><path d="M6.5 4.5V7" stroke="#702000" stroke-width="1"/><rect x="6" y="8" width="1" height="1" fill="#702000"/></svg>
<div class="t" style="left:38px;top:465px;font-size:12px;letter-spacing:-0.62px">2019.03.30 09:20:07.103</div>
<div class="t" style="left:180px;top:465px;font-size:12px;letter-spacing:-0.55px">2019.01.08 14:55:58</div>
<div class="t" style="left:285px;top:465px;font-size:12px;letter-spacing:-0.38px">GridIncrease_goold-EA EURUSD,H1: OrderSend error 131</div>
<div class="abs" style="left:15px;top:481px;width:1330px;height:19px;background:#fff"></div>
<div class="abs" style="left:15px;top:500px;width:1330px;height:1px;background:#c8c8c8"></div>
<div class="abs" style="left:174px;top:481px;width:1px;height:19px;background:#c8c8c8"></div>
<svg style="left:20px;top:485px" width="13" height="11"><path d="M6.5 0.5L12.5 10.5H0.5Z" fill="#e85c14" stroke="#b83c08" stroke-width="1" stroke-linejoin="round"/><path d="M6.5 2.8L10.6 9.5H2.4Z" fill="none" stroke="#ffc8a0" stroke-width="0.8"/><path d="M6.5 4.5V7" stroke="#702000" stroke-width="1"/><rect x="6" y="8" width="1" height="1" fill="#702000"/></svg>
<div class="t" style="left:38px;top:485px;font-size:12px;letter-spacing:-0.62px">2019.03.30 09:20:07.103</div>
<div class="t" style="left:180px;top:485px;font-size:12px;letter-spacing:-0.55px">2019.01.08 14:55:58</div>
<div class="t" style="left:285px;top:485px;font-size:12px;letter-spacing:-0.38px">GridIncrease_goold-EA EURUSD,H1: OrderSend error 131</div>
<div class="abs" style="left:15px;top:501px;width:1330px;height:19px;background:#e9e9e9"></div>
<div class="abs" style="left:15px;top:520px;width:1330px;height:1px;background:#c8c8c8"></div>
<div class="abs" style="left:174px;top:501px;width:1px;height:19px;background:#c8c8c8"></div>
<svg style="left:20px;top:505px" width="13" height="11"><path d="M6.5 0.5L12.5 10.5H0.5Z" fill="#e85c14" stroke="#b83c08" stroke-width="1" stroke-linejoin="round"/><path d="M6.5 2.8L10.6 9.5H2.4Z" fill="none" stroke="#ffc8a0" stroke-width="0.8"/><path d="M6.5 4.5V7" stroke="#702000" stroke-width="1"/><rect x="6" y="8" width="1" height="1" fill="#702000"/></svg>
<div class="t" style="left:38px;top:505px;font-size:12px;letter-spacing:-0.62px">2019.03.30 09:20:07.103</div>
<div class="t" style="left:180px;top:505px;font-size:12px;letter-spacing:-0.55px">2019.01.08 14:55:57</div>
<div class="t" style="left:285px;top:505px;font-size:12px;letter-spacing:-0.38px">GridIncrease_goold-EA EURUSD,H1: OrderSend error 131</div>
<div class="abs" style="left:15px;top:521px;width:1330px;height:19px;background:#fff"></div>
<div class="abs" style="left:15px;top:540px;width:1330px;height:1px;background:#c8c8c8"></div>
<div class="abs" style="left:174px;top:521px;width:1px;height:19px;background:#c8c8c8"></div>
<svg style="left:20px;top:525px" width="13" height="11"><path d="M6.5 0.5L12.5 10.5H0.5Z" fill="#e85c14" stroke="#b83c08" stroke-width="1" stroke-linejoin="round"/><path d="M6.5 2.8L10.6 9.5H2.4Z" fill="none" stroke="#ffc8a0" stroke-width="0.8"/><path d="M6.5 4.5V7" stroke="#702000" stroke-width="1"/><rect x="6" y="8" width="1" height="1" fill="#702000"/></svg>
<div class="t" style="left:38px;top:525px;font-size:12px;letter-spacing:-0.62px">2019.03.30 09:20:07.103</div>
<div class="t" style="left:180px;top:525px;font-size:12px;letter-spacing:-0.55px">2019.01.08 14:55:57</div>
<div class="t" style="left:285px;top:525px;font-size:12px;letter-spacing:-0.38px">GridIncrease_goold-EA EURUSD,H1: OrderSend error 131</div>
<div class="abs" style="left:15px;top:541px;width:1330px;height:19px;background:#e9e9e9"></div>
<div class="abs" style="left:15px;top:560px;width:1330px;height:1px;background:#c8c8c8"></div>
<div class="abs" style="left:174px;top:541px;width:1px;height:19px;background:#c8c8c8"></div>
<svg style="left:20px;top:545px" width="13" height="11"><path d="M6.5 0.5L12.5 10.5H0.5Z" fill="#e85c14" stroke="#b83c08" stroke-width="1" stroke-linejoin="round"/><path d="M6.5 2.8L10.6 9.5H2.4Z" fill="none" stroke="#ffc8a0" stroke-width="0.8"/><path d="M6.5 4.5V7" stroke="#702000" stroke-width="1"/><rect x="6" y="8" width="1" height="1" fill="#702000"/></svg>
<div class="t" style="left:38px;top:545px;font-size:12px;letter-spacing:-0.62px">2019.03.30 09:20:07.103</div>
<div class="t" style="left:180px;top:545px;font-size:12px;letter-spacing:-0.55px">2019.01.08 14:55:57</div>
<div class="t" style="left:285px;top:545px;font-size:12px;letter-spacing:-0.38px">GridIncrease_goold-EA EURUSD,H1: OrderSend error 131</div>
<div class="abs" style="left:15px;top:561px;width:1330px;height:19px;background:#fff"></div>
<div class="abs" style="left:15px;top:580px;width:1330px;height:1px;background:#c8c8c8"></div>
<div class="abs" style="left:174px;top:561px;width:1px;height:19px;background:#c8c8c8"></div>
<svg style="left:20px;top:565px" width="13" height="11"><path d="M6.5 0.5L12.5 10.5H0.5Z" fill="#e85c14" stroke="#b83c08" stroke-width="1" stroke-linejoin="round"/><path d="M6.5 2.8L10.6 9.5H2.4Z" fill="none" stroke="#ffc8a0" stroke-width="0.8"/><path d="M6.5 4.5V7" stroke="#702000" stroke-width="1"/><rect x="6" y="8" width="1" height="1" fill="#702000"/></svg>
<div class="t" style="left:38px;top:565px;font-size:12px;letter-spacing:-0.62px">2019.03.30 09:20:07.103</div>
<div class="t" style="left:180px;top:565px;font-size:12px;letter-spacing:-0.55px">2019.01.08 14:55:57</div>
<div class="t" style="left:285px;top:565px;font-size:12px;letter-spacing:-0.38px">GridIncrease_goold-EA EURUSD,H1: OrderSend error 131</div>
<div class="abs" style="left:15px;top:581px;width:1330px;height:19px;background:#e9e9e9"></div>
<div class="abs" style="left:15px;top:600px;width:1330px;height:1px;background:#c8c8c8"></div>
<div class="abs" style="left:174px;top:581px;width:1px;height:19px;background:#c8c8c8"></div>
<svg style="left:20px;top:585px" width="13" height="11"><path d="M6.5 0.5L12.5 10.5H0.5Z" fill="#e85c14" stroke="#b83c08" stroke-width="1" stroke-linejoin="round"/><path d="M6.5 2.8L10.6 9.5H2.4Z" fill="none" stroke="#ffc8a0" stroke-width="0.8"/><path d="M6.5 4.5V7" stroke="#702000" stroke-width="1"/><rect x="6" y="8" width="1" height="1" fill="#702000"/></svg>
<div class="t" style="left:38px;top:585px;font-size:12px;letter-spacing:-0.62px">2019.03.30 09:20:07.103</div>
<div class="t" style="left:180px;top:585px;font-size:12px;letter-spacing:-0.55px">2019.01.08 14:55:56</div>
<div class="t" style="left:285px;top:585px;font-size:12px;letter-spacing:-0.38px">GridIncrease_goold-EA EURUSD,H1: OrderSend error 131</div>
<div class="abs" style="left:15px;top:601px;width:1330px;height:19px;background:#fff"></div>
<div class="abs" style="left:15px;top:620px;width:1330px;height:1px;background:#c8c8c8"></div>
<div class="abs" style="left:174px;top:601px;width:1px;height:19px;background:#c8c8c8"></div>
<svg style="left:20px;top:605px" width="13" height="11"><path d="M6.5 0.5L12.5 10.5H0.5Z" fill="#e85c14" stroke="#b83c08" stroke-width="1" stroke-linejoin="round"/><path d="M6.5 2.8L10.6 9.5H2.4Z" fill="none" stroke="#ffc8a0" stroke-width="0.8"/><path d="M6.5 4.5V7" stroke="#702000" stroke-width="1"/><rect x="6" y="8" width="1" height="1" fill="#702000"/></svg>
<div class="t" style="left:38px;top:605px;font-size:12px;letter-spacing:-0.62px">2019.03.30 09:20:07.103</div>
<div class="t" style="left:180px;top:605px;font-size:12px;letter-spacing:-0.55px">2019.01.08 14:55:56</div>
<div class="t" style="left:285px;top:605px;font-size:12px;letter-spacing:-0.38px">GridIncrease_goold-EA EURUSD,H1: OrderSend error 131</div>
<div class="abs" style="left:15px;top:621px;width:1330px;height:19px;background:#e9e9e9"></div>
<div class="abs" style="left:15px;top:640px;width:1330px;height:1px;background:#c8c8c8"></div>
<div class="abs" style="left:174px;top:621px;width:1px;height:19px;background:#c8c8c8"></div>
<svg style="left:20px;top:625px" width="13" height="11"><path d="M6.5 0.5L12.5 10.5H0.5Z" fill="#e85c14" stroke="#b83c08" stroke-width="1" stroke-linejoin="round"/><path d="M6.5 2.8L10.6 9.5H2.4Z" fill="none" stroke="#ffc8a0" stroke-width="0.8"/><path d="M6.5 4.5V7" stroke="#702000" stroke-width="1"/><rect x="6" y="8" width="1" height="1" fill="#702000"/></svg>
<div class="t" style="left:38px;top:625px;font-size:12px;letter-spacing:-0.62px">2019.03.30 09:20:07.103</div>
<div class="t" style="left:180px;top:625px;font-size:12px;letter-spacing:-0.55px">2019.01.08 14:55:56</div>
<div class="t" style="left:285px;top:625px;font-size:12px;letter-spacing:-0.38px">GridIncrease_goold-EA EURUSD,H1: OrderSend error 131</div>
<div class="abs" style="left:15px;top:641px;width:1330px;height:19px;background:#fff"></div>
<div class="abs" style="left:15px;top:660px;width:1330px;height:1px;background:#c8c8c8"></div>
<div class="abs" style="left:174px;top:641px;width:1px;height:19px;background:#c8c8c8"></div>
<svg style="left:20px;top:645px" width="13" height="11"><path d="M6.5 0.5L12.5 10.5H0.5Z" fill="#e85c14" stroke="#b83c08" stroke-width="1" stroke-linejoin="round"/><path d="M6.5 2.8L10.6 9.5H2.4Z" fill="none" stroke="#ffc8a0" stroke-width="0.8"/><path d="M6.5 4.5V7" stroke="#702000" stroke-width="1"/><rect x="6" y="8" width="1" height="1" fill="#702000"/></svg>
<div class="t" style="left:38px;top:645px;font-size:12px;letter-spacing:-0.62px">2019.03.30 09:20:07.103</div>
<div class="t" style="left:180px;top:645px;font-size:12px;letter-spacing:-0.55px">2019.01.08 14:55:56</div>
<div class="t" style="left:285px;top:645px;font-size:12px;letter-spacing:-0.38px">GridIncrease_goold-EA EURUSD,H1: OrderSend error 131</div>
<div class="abs" style="left:15px;top:661px;width:1330px;height:18px;background:#e9e9e9"></div>
<div class="abs" style="left:174px;top:661px;width:1px;height:19px;background:#c8c8c8"></div>
<svg style="left:20px;top:665px" width="13" height="11"><path d="M6.5 0.5L12.5 10.5H0.5Z" fill="#e85c14" stroke="#b83c08" stroke-width="1" stroke-linejoin="round"/><path d="M6.5 2.8L10.6 9.5H2.4Z" fill="none" stroke="#ffc8a0" stroke-width="0.8"/><path d="M6.5 4.5V7" stroke="#702000" stroke-width="1"/><rect x="6" y="8" width="1" height="1" fill="#702000"/></svg>
<div class="t" style="left:38px;top:665px;font-size:12px;letter-spacing:-0.62px">2019.03.30 09:20:07.103</div>
<div class="t" style="left:180px;top:665px;font-size:12px;letter-spacing:-0.55px">2019.01.08 14:55:55</div>
<div class="t" style="left:285px;top:665px;font-size:12px;letter-spacing:-0.38px">GridIncrease_goold-EA EURUSD,H1: OrderSend error 131</div>
<div class="abs" style="left:15px;top:341px;width:1330px;height:1px;background:#c8c8c8"></div>
<div class="abs" style="left:1345px;top:317px;width:1px;height:363px;background:#fff"></div>
<div class="abs" style="left:1346px;top:317px;width:17px;height:363px;background:#f0f0f0"></div>
<svg style="left:1349px;top:323px" width="9" height="6"><path d="M1 5L4.5 1.5L8 5" fill="none" stroke="#505050" stroke-width="2"/></svg>
<div class="abs" style="left:1346px;top:334px;width:15px;height:17px;background:#cdcdcd"></div>
<svg style="left:1349px;top:667px" width="9" height="6"><path d="M1 1L4.5 4.5L8 1" fill="none" stroke="#505050" stroke-width="2"/></svg>
<div class="abs" style="left:1363px;top:317px;width:1px;height:363px;background:#fff"></div>
<div class="abs" style="left:15px;top:679px;width:1348px;height:1px;background:#000"></div>
<div class="t" style="left:28px;top:683px;font-size:12px;color:#7a7a8a;letter-spacing:-0.3px">Settings</div>
<div class="t" style="left:90px;top:683px;font-size:12px;color:#7a7a8a;letter-spacing:-0.3px">Results</div>
<div class="t" style="left:147px;top:683px;font-size:12px;color:#7a7a8a;letter-spacing:-0.3px">Graph</div>
<div class="t" style="left:199px;top:683px;font-size:12px;color:#7a7a8a;letter-spacing:-0.3px">Report</div>
<div class="abs" style="left:80px;top:683px;width:1px;height:13px;background:#666"></div>
<div class="abs" style="left:137px;top:683px;width:1px;height:13px;background:#666"></div>
<div class="abs" style="left:189px;top:683px;width:1px;height:13px;background:#666"></div>
<div class="abs" style="left:244px;top:679px;width:58px;height:20px;background:#fff;border:1px solid #000;border-top:none"></div>
<div class="abs" style="left:245px;top:699px;width:58px;height:1px;background:#c0c0c0"></div>
<div class="t" style="left:254px;top:683px;font-size:12px;letter-spacing:-0.3px">Journal</div>
<div class="abs" style="left:0px;top:702px;width:1366px;height:1px;background:#fff"></div>
<div class="abs" style="left:0px;top:704px;width:1366px;height:1px;background:#a0a0a0"></div>
<div class="abs" style="left:0px;top:705px;width:1366px;height:23px;background:#f0f0f0"></div>
<div class="t" style="left:2px;top:712px;font-size:12px;letter-spacing:-0.1px">Experts output page</div>
<div class="abs" style="left:672px;top:709px;width:1px;height:18px;background:#a0a0a0"></div>
<div class="abs" style="left:788px;top:709px;width:1px;height:18px;background:#a0a0a0"></div>
<div class="abs" style="left:890px;top:709px;width:1px;height:18px;background:#a0a0a0"></div>
<div class="abs" style="left:961px;top:709px;width:1px;height:18px;background:#a0a0a0"></div>
<div class="abs" style="left:1033px;top:709px;width:1px;height:18px;background:#a0a0a0"></div>
<div class="abs" style="left:1101px;top:709px;width:1px;height:18px;background:#a0a0a0"></div>
<div class="abs" style="left:1170px;top:709px;width:1px;height:18px;background:#a0a0a0"></div>
<div class="abs" style="left:1236px;top:709px;width:1px;height:18px;background:#a0a0a0"></div>
<div class="t" style="left:678px;top:712px;font-size:12px;letter-spacing:-0.2px">Default</div>
<svg style="left:1242px;top:711px" width="24" height="13" shape-rendering="crispEdges"><rect x="0" y="0" width="2" height="9" fill="#5a7a00"/><rect x="0" y="10" width="2" height="3" fill="#002a50"/><rect x="3" y="0" width="2" height="8" fill="#5a7a00"/><rect x="3" y="9" width="2" height="4" fill="#002a50"/><rect x="6" y="0" width="2" height="7" fill="#5a7a00"/><rect x="6" y="8" width="2" height="5" fill="#002a50"/><rect x="9" y="0" width="2" height="6" fill="#5a7a00"/><rect x="9" y="7" width="2" height="6" fill="#002a50"/><rect x="12" y="0" width="2" height="5" fill="#5a7a00"/><rect x="12" y="6" width="2" height="7" fill="#002a50"/><rect x="15" y="0" width="2" height="4" fill="#5a7a00"/><rect x="15" y="5" width="2" height="8" fill="#002a50"/><rect x="18" y="0" width="2" height="3" fill="#5a7a00"/><rect x="18" y="4" width="2" height="9" fill="#002a50"/><rect x="21" y="0" width="2" height="2" fill="#5a7a00"/><rect x="21" y="3" width="2" height="10" fill="#002a50"/></svg>
<div class="t" style="left:1269px;top:712px;font-size:12px;letter-spacing:-0.3px">2573/4 kb</div>
<div class="abs" style="left:0px;top:728px;width:1366px;height:40px;background:#000"></div>
<svg style="left:16px;top:740px" width="17" height="17"><path d="M0 2.3L7 1.3V7.6H0ZM8 1.1L17 0V7.6H8ZM0 8.6H7V15L0 14ZM8 8.6H17V17L8 15.8Z" fill="#fff"/></svg>
<svg style="left:63px;top:739px" width="19" height="19"><circle cx="11.5" cy="7" r="5.5" fill="none" stroke="#fff" stroke-width="1.3"/><path d="M7.5 11L1 17.5" stroke="#fff" stroke-width="1.5"/></svg>
<svg style="left:110px;top:741px" width="21" height="14"><rect x="4.5" y="0.5" width="12" height="13" fill="none" stroke="#fff"/><path d="M2.5 2H0.5V12H2.5M18.5 2H20.5V12H18.5" fill="none" stroke="#fff"/></svg>
<svg style="left:160px;top:737px" width="21" height="22"><path d="M10.5 1C4 1 0 6 0 12C0 18 5 22 11 22C14 22 17 21 19 19.5V15C17 17 14.5 18 12 18C8.5 18 6 16 6 13.5H20.5C21 6 17 1 10.5 1ZM6.5 9.5C7 7 9 5.5 11.5 5.5C14 5.5 15.5 7 15.5 9.5Z" fill="#1a7ad8"/></svg>
<svg style="left:207px;top:738px" width="23" height="20"><path d="M0 2H8L10 4H22V19H0Z" fill="#f0c850"/><rect x="0" y="6" width="22" height="13" fill="#fad870"/><path d="M6 19V13H16V19H13V16H9V19Z" fill="#1ab0f0"/></svg>
<svg style="left:256px;top:737px" width="23" height="23"><circle cx="11.5" cy="11.5" r="11" fill="#db4437"/><path d="M11.5 11.5L2 17A11 11 0 0 0 13 22.5Z" fill="#0f9d58"/><path d="M11.5 11.5L13 22.5A11 11 0 0 0 22.5 11.5H11.5Z" fill="#ffcd40"/><circle cx="11.5" cy="11.5" r="5" fill="#fff"/><circle cx="11.5" cy="11.5" r="4" fill="#4285f4"/></svg>
<div class="abs" style="left:248px;top:766px;width:41px;height:2px;background:#76b9ed"></div>
<div class="abs" style="left:306px;top:736px;width:22px;height:24px;background:#fff"></div>
<svg style="left:309px;top:739px" width="16" height="12"><path d="M1 11L6 4H9L4 11ZM7 11L13 1H16L10 11Z" fill="#c8102e"/></svg>
<div class="t" style="left:307px;top:752px;font-size:6px;font-weight:bold;color:#333">FXDD</div>
<svg style="left:354px;top:736px" width="24" height="24"><circle cx="12" cy="12" r="11.5" fill="#e05a2a"/><path d="M4 5L20 21M20 4L6 21" stroke="#f4d0c0" stroke-width="2"/><path d="M14 1A11.5 11.5 0 0 1 23 8L17 9Z" fill="#a8c850"/></svg>
<div class="abs" style="left:403px;top:736px;width:24px;height:23px;background:#1a1a1a;border-radius:3px"></div>
<div class="t" style="left:406px;top:742px;font-size:11px;font-weight:bold;font-style:italic;color:#fff;letter-spacing:-0.5px">XM</div>
<div class="abs" style="left:404px;top:744px;width:3px;height:6px;background:#e02020"></div>
<div class="abs" style="left:440px;top:728px;width:48px;height:38px;background:#333"></div>
<div class="abs" style="left:440px;top:766px;width:48px;height:2px;background:#76b9ed"></div>
<div class="t" style="left:452px;top:741px;font-size:12px;font-weight:bold;color:#d8b060;letter-spacing:-1px">IIIEX</div>
<svg style="left:499px;top:735px" width="26" height="26"><ellipse cx="11" cy="15" rx="10.5" ry="8" fill="#bcd8f0" stroke="#7aa0c0"/><circle cx="6" cy="16" r="2" fill="#e03030"/><circle cx="8" cy="11" r="2" fill="#f0c030"/><circle cx="13" cy="10" r="2" fill="#30b030"/><path d="M24 1L12 22" stroke="#f0a030" stroke-width="2.2"/><path d="M21 1L25 3L22 6Z" fill="#d08010"/></svg>
<div class="abs" style="left:493px;top:766px;width:40px;height:2px;background:#76b9ed"></div>
<div class="abs" style="left:1052px;top:735px;width:47px;height:24px;background:#404040;border:2px solid #fff"></div>
<div class="abs" style="left:1054px;top:737px;width:31px;height:20px;background:#20c060"></div>
<div class="abs" style="left:1099px;top:742px;width:5px;height:10px;background:#fff"></div>
<div class="t" style="left:1062px;top:741px;font-size:13px;color:#fff;letter-spacing:-0.5px">69%</div>
<svg style="left:1095px;top:729px" width="13" height="13"><circle cx="6.5" cy="6.5" r="6" fill="#ff1020"/></svg>
<svg style="left:1117px;top:743px" width="13" height="8"><path d="M0.5 7L6.5 1L12.5 7" fill="none" stroke="#fff" stroke-width="1.3"/></svg>
<svg style="left:1140px;top:743px" width="16" height="10"><rect x="0.5" y="0.5" width="13" height="9" fill="none" stroke="#fff"/><rect x="2" y="2" width="6" height="6" fill="#fff"/><rect x="14" y="3" width="2" height="4" fill="#fff"/></svg>
<svg style="left:1162px;top:741px" width="19" height="12"><path d="M3 11A3 3 0 0 1 3 6A4 4 0 0 1 9 3A5 5 0 0 1 17 6A2.6 2.6 0 0 1 17 11Z" fill="#fff"/></svg>
<svg style="left:1188px;top:740px" width="16" height="16"><path d="M1 15A14 14 0 0 1 15 1M4 15A11 11 0 0 1 15 4M7 15A8 8 0 0 1 15 7M10 15A5 5 0 0 1 15 10" fill="none" stroke="#fff" stroke-width="1.1"/></svg>
<svg style="left:1210px;top:740px" width="18" height="16"><path d="M1 5H4L8 1V15L4 11H1Z" fill="none" stroke="#fff" stroke-width="1.1"/><path d="M11 5A4 4 0 0 1 11 11M13 3A7 7 0 0 1 13 13M15 1A10 10 0 0 1 15 15" fill="none" stroke="#fff" stroke-width="1.1"/></svg>
<svg style="left:1235px;top:740px" width="16" height="17"><path d="M0.5 0.5H15.5V12.5H9L6.5 16V12.5H0.5Z" fill="#fff"/><path d="M3 4H13M3 6.5H13M3 9H11" stroke="#000"/></svg>
<div class="t" style="left:1262px;top:742px;font-size:11.5px;color:#fff;letter-spacing:-1.2px">ENG</div>
<div class="t" style="left:1303px;top:733px;font-size:12px;color:#fff;letter-spacing:-0.2px">9:20 AM</div>
<div class="t" style="left:1300px;top:751px;font-size:12px;color:#fff;letter-spacing:-0.2px">3/30/2019</div>
<div class="abs" style="left:1363px;top:728px;width:1px;height:40px;background:#3a3a3a"></div>
</body></html>
